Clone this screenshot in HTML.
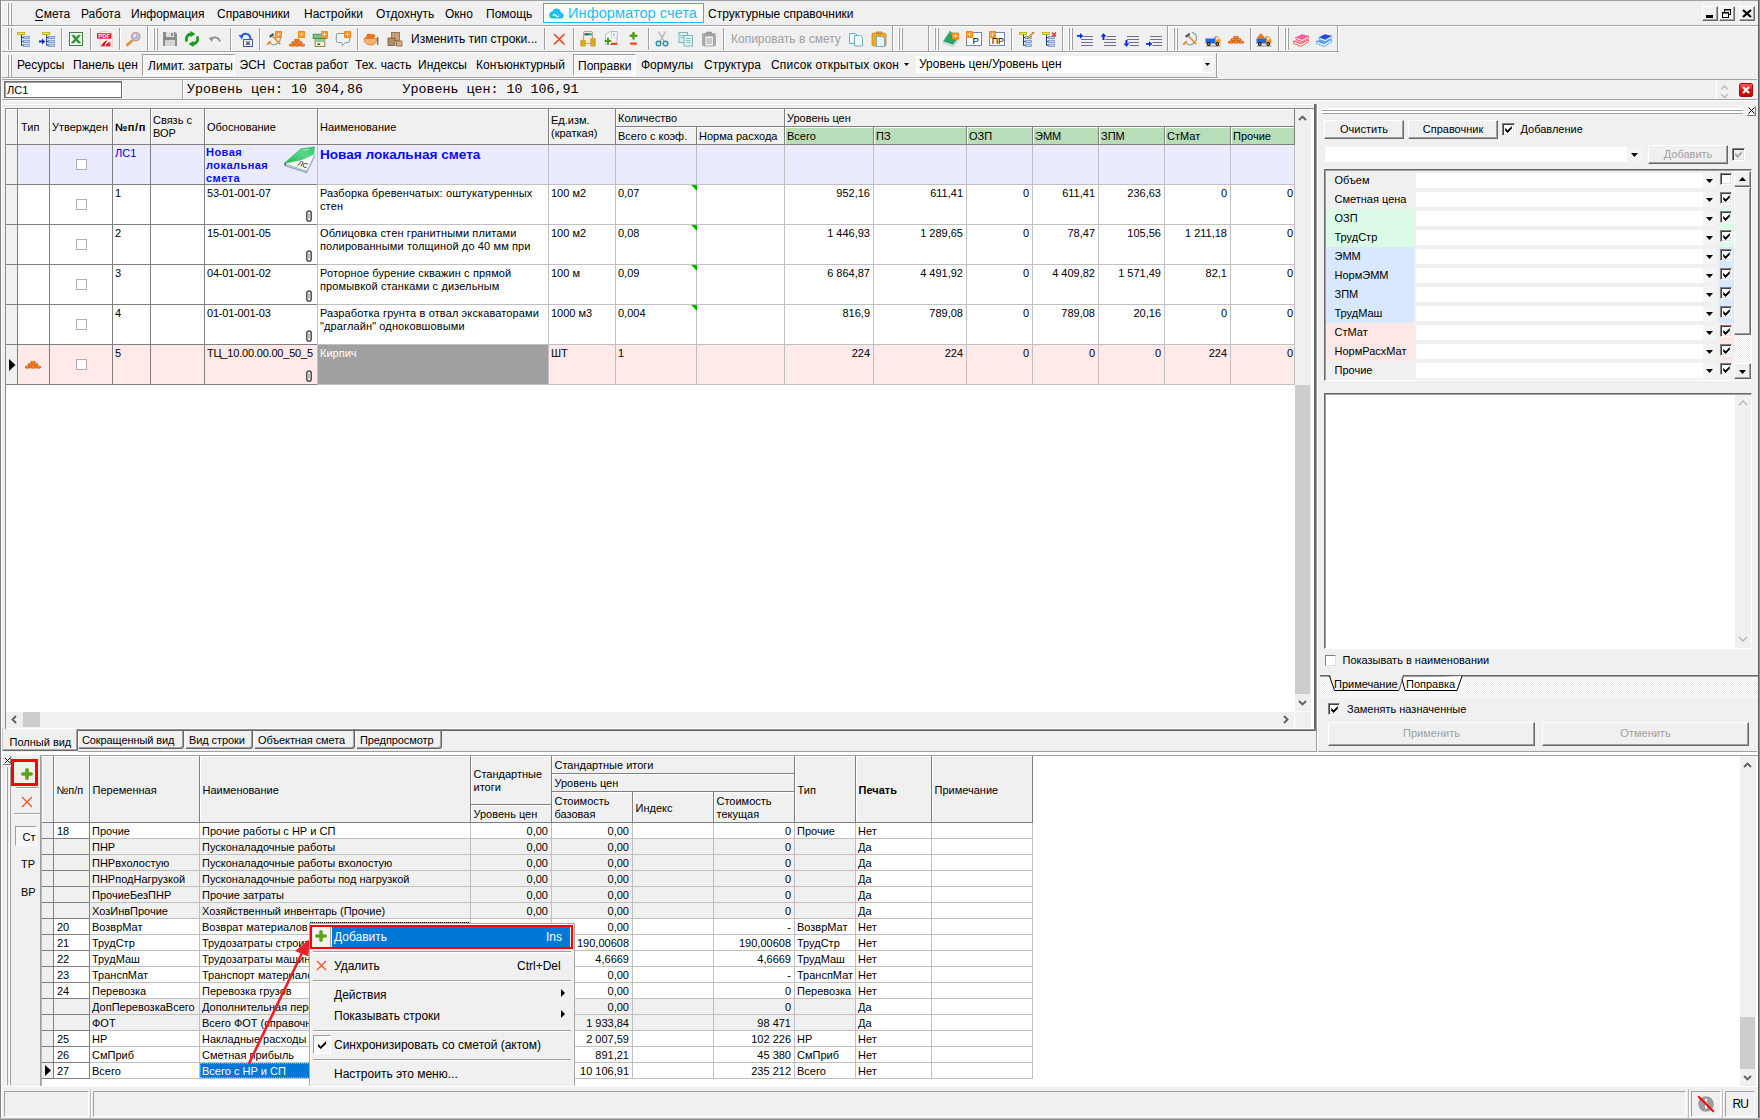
<!DOCTYPE html><html lang="ru"><head><meta charset="utf-8"><title>Смета</title><style>
html,body{margin:0;padding:0}
body{width:1760px;height:1120px;overflow:hidden;background:#f0f0f0;position:relative;
 font-family:"Liberation Sans",sans-serif;font-size:11px;color:#000}
div,span,svg{position:absolute;box-sizing:border-box}
span{white-space:pre;line-height:1}
.t{font-size:11px}
.m{font-size:12px}
.mono{font-family:"Liberation Mono",monospace;font-size:13.33px}
.r{text-align:right}
.btn{background:#f0f0f0;border:1px solid;border-color:#fff #696969 #696969 #fff;box-shadow:inset -1px -1px 0 #a0a0a0}
.sunk{border:1px solid;border-color:#a0a0a0 #fff #fff #a0a0a0}
</style></head><body>
<div style="left:0px;top:0px;width:1760px;height:1px;background:#a0a0a0"></div>
<div style="left:0px;top:0px;width:1px;height:1120px;background:#828282"></div>
<div style="left:1px;top:1px;width:1px;height:1118px;background:#fff"></div>
<div style="left:1759px;top:0px;width:1px;height:1120px;background:#8c9098"></div>
<div style="left:1758px;top:0px;width:1px;height:1120px;background:#5a6068"></div>
<div style="left:0px;top:1119px;width:1760px;height:1px;background:#8c8c8c"></div>
<div style="left:0px;top:1118px;width:1760px;height:1px;background:#c0c0c0"></div>
<div style="left:2px;top:25px;width:1756px;height:1px;background:#a0a0a0"></div>
<div style="left:2px;top:26px;width:1756px;height:1px;background:#ffffff"></div>
<div style="left:2px;top:51px;width:1337px;height:1px;background:#a0a0a0"></div>
<div style="left:2px;top:52px;width:1337px;height:1px;background:#ffffff"></div>
<div style="left:2px;top:77px;width:1216px;height:1px;background:#a0a0a0"></div>
<div style="left:2px;top:78px;width:1216px;height:1px;background:#ffffff"></div>
<div style="left:7px;top:3px;width:1px;height:22px;background:#ffffff"></div>
<div style="left:8px;top:3px;width:1px;height:22px;background:#a0a0a0"></div>
<div style="left:10px;top:3px;width:1px;height:22px;background:#ffffff"></div>
<div style="left:11px;top:3px;width:1px;height:22px;background:#a0a0a0"></div>
<span class="m" style="left:35px;top:8px;">Смета</span>
<span class="m" style="left:81px;top:8px;">Работа</span>
<span class="m" style="left:131px;top:8px;">Информация</span>
<span class="m" style="left:217px;top:8px;">Справочники</span>
<span class="m" style="left:304px;top:8px;">Настройки</span>
<span class="m" style="left:376px;top:8px;">Отдохнуть</span>
<span class="m" style="left:445px;top:8px;">Окно</span>
<span class="m" style="left:486px;top:8px;">Помощь</span>
<div style="left:35px;top:20px;width:8px;height:1px;background:#000"></div>
<div style="left:543px;top:3px;width:161px;height:20px;border:1px solid #1fbef2;background:#fbfdff"></div>
<svg style="left:548px;top:7px" width="16" height="12" viewBox="0 0 16 12"><path d="M4 11.5h8.5a3 3 0 0 0 .4-6A4.4 4.4 0 0 0 4.3 4.6 3.5 3.5 0 0 0 4 11.5z" fill="#1fbef2"/><path d="M5 8.6c.8-1.3 2-1.3 2.9 0 .9 1.300 2 1.300 2.900 0" fill="none" stroke="#fff" stroke-width="1.2"/></svg>
<span class="m" style="left:568px;top:6px;font-size:14.67px;color:#1fbef2">Информатор счета</span>
<span class="m" style="left:708px;top:8px;">Структурные справочники</span>
<div class="btn" style="left:1702px;top:6px;width:16px;height:15px;"></div>

<div style="left:1706px;top:15px;width:7px;height:3px;background:#000"></div>
<div class="btn" style="left:1719px;top:6px;width:16px;height:15px;"></div>

<svg style="left:1721px;top:8px" width="12" height="11" viewBox="0 0 12 11"><rect x="3.5" y="1.500" width="6" height="5" fill="none" stroke="#000"/><rect x="3" y="1" width="7" height="1.500" fill="#000"/><rect x="1.500" y="4.500" width="6" height="5" fill="#f0f0f0" stroke="#000"/><rect x="1" y="4" width="7" height="1.500" fill="#000"/></svg>
<div class="btn" style="left:1739px;top:6px;width:16px;height:15px;"></div>

<svg style="left:1742px;top:9px" width="10" height="9" viewBox="0 0 10 9"><path d="M1 1l8 7M9 1L1 8" stroke="#000" stroke-width="2.300"/></svg>
<div style="left:7px;top:28px;width:1px;height:22px;background:#ffffff"></div>
<div style="left:8px;top:28px;width:1px;height:22px;background:#a0a0a0"></div>
<div style="left:10px;top:28px;width:1px;height:22px;background:#ffffff"></div>
<div style="left:11px;top:28px;width:1px;height:22px;background:#a0a0a0"></div>
<svg style="left:16px;top:31px" width="16" height="16" viewBox="0 0 16 16"><rect x="1.300" y="1.400" width="7.400" height="2.200" fill="#f0e428" stroke="#a8a000" stroke-width=".6"/><path d="M5.500 3.800V14.500M5.500 6.500h2M5.500 10.400h2M5.500 14.300h2" stroke="#283870" stroke-width="1" fill="none"/><rect x="7.400" y="5.300" width="6.200" height="2.300" fill="#b4d0f4" stroke="#6888c0" stroke-width=".7"/><rect x="7.400" y="9.200" width="6.200" height="2.300" fill="#b4d0f4" stroke="#6888c0" stroke-width=".7"/><rect x="7.400" y="13.100" width="6.200" height="2.300" fill="#b4d0f4" stroke="#6888c0" stroke-width=".7"/></svg>
<svg style="left:39px;top:31px" width="16" height="16" viewBox="0 0 16 16"><g transform="translate(2.200,0)"><rect x="1.300" y="1.400" width="7.400" height="2.200" fill="#f0e428" stroke="#a8a000" stroke-width=".6"/><path d="M5.500 3.800V14.500M5.500 6.500h2M5.500 10.400h2M5.500 14.300h2" stroke="#283870" stroke-width="1" fill="none"/><rect x="7.400" y="5.300" width="6.200" height="2.300" fill="#b4d0f4" stroke="#6888c0" stroke-width=".7"/><rect x="7.400" y="9.200" width="6.200" height="2.300" fill="#b4d0f4" stroke="#6888c0" stroke-width=".7"/><rect x="7.400" y="13.100" width="6.200" height="2.300" fill="#b4d0f4" stroke="#6888c0" stroke-width=".7"/></g><path d="M0 9.500h3V7.600l3.200 2.900L3 13.400v-1.900H0z" fill="#0828e0"/></svg>
<div style="left:61px;top:28px;width:1px;height:22px;background:#a0a0a0"></div>
<div style="left:62px;top:28px;width:1px;height:22px;background:#ffffff"></div>
<svg style="left:68px;top:31px" width="16" height="16" viewBox="0 0 16 16"><rect x="1.500" y="1.500" width="13" height="13" fill="#eef4e8" stroke="#3c7c3c" stroke-width="1"/><rect x="2.500" y="2.500" width="11" height="11" fill="none" stroke="#fff" stroke-width=".8"/><path d="M3.600 4.200h2.800l1.700 2.200 1.900-2.200h2.600L9.300 7.900l3.500 4h-2.700L8 9.500l-2.200 2.400H3.200l3.500-4z" fill="#2c9a3c" stroke="#1c6c28" stroke-width=".4"/></svg>
<div style="left:90px;top:28px;width:1px;height:22px;background:#a0a0a0"></div>
<div style="left:91px;top:28px;width:1px;height:22px;background:#ffffff"></div>
<svg style="left:97px;top:31px" width="16" height="16" viewBox="0 0 16 16"><path d="M3.500 .5h9l3 3v12h-12z" fill="#f8f8f8" stroke="#c8c8c8" stroke-width=".6"/><rect x="0" y="2.200" width="14.400" height="5.500" fill="#e8141c"/><text x="7.200" y="6.900" font-size="5.600" font-weight="bold" font-family="Liberation Sans,sans-serif" text-anchor="middle" fill="#fff" letter-spacing=".3">PDF</text><path d="M4 15.200c1.500-3.500 3.500-5.500 7-6-1.800 1.400-2.800 3.300-3.300 6zM8.500 15.200c1-2.800 2.600-4.400 5.800-5-1.600 1.300-2.400 3-2.800 5z" fill="#e01020"/><path d="M11 15.200c.8-1.800 1.800-2.800 3.600-3.300-.9 1-1.300 2-1.500 3.300z" fill="#e01020"/></svg>
<div style="left:119px;top:28px;width:1px;height:22px;background:#a0a0a0"></div>
<div style="left:120px;top:28px;width:1px;height:22px;background:#ffffff"></div>
<svg style="left:125px;top:31px" width="16" height="16" viewBox="0 0 16 16"><path d="M2.200 14l4.600-4" stroke="#e07820" stroke-width="2.400" stroke-linecap="round"/><path d="M2.200 14l4.600-4" stroke="#f8b070" stroke-width=".8" stroke-linecap="round"/><circle cx="10.700" cy="5.700" r="4.200" fill="#b8ccf4" stroke="#d8906c" stroke-width="1.200"/><circle cx="10.700" cy="5.700" r="2.600" fill="#a4bcf0"/><circle cx="9.600" cy="4.500" r="1.500" fill="#e4ecfc"/></svg>
<div style="left:147px;top:26px;width:1px;height:25px;background:#a0a0a0"></div>
<div style="left:148px;top:27px;width:1px;height:24px;background:#fff"></div>
<div style="left:153px;top:28px;width:1px;height:22px;background:#ffffff"></div>
<div style="left:154px;top:28px;width:1px;height:22px;background:#a0a0a0"></div>
<div style="left:156px;top:28px;width:1px;height:22px;background:#ffffff"></div>
<div style="left:157px;top:28px;width:1px;height:22px;background:#a0a0a0"></div>
<svg style="left:162px;top:31px" width="16" height="16" viewBox="0 0 16 16"><path d="M1 1h12l2 2v12H1z" fill="#8c8c8c"/><rect x="4" y="1" width="8" height="5" fill="#e0e0e0"/><rect x="9" y="2" width="2" height="3" fill="#8c8c8c"/><rect x="3" y="9" width="10" height="6" fill="#d4d4d4"/></svg>
<svg style="left:184px;top:31px" width="16" height="16" viewBox="0 0 16 16"><path d="M3 10.500A5 5 0 0 1 7.500 3" fill="none" stroke="#1c9c1c" stroke-width="2.800"/><path d="M6.500 0l5 3-5 3.200z" fill="#1c9c1c"/><path d="M13 5.500A5 5 0 0 1 8.500 13" fill="none" stroke="#1c9c1c" stroke-width="2.800"/><path d="M9.500 16l-5-3 5-3.200z" fill="#1c9c1c"/></svg>
<svg style="left:207px;top:31px" width="16" height="16" viewBox="0 0 16 16"><path d="M4 9c1.500-3.500 7-4 9 1.500" fill="none" stroke="#8c8c8c" stroke-width="1.800"/><path d="M1.500 6.500l4.500 0-1 4.500z" fill="#8c8c8c"/></svg>
<div style="left:230px;top:28px;width:1px;height:22px;background:#a0a0a0"></div>
<div style="left:231px;top:28px;width:1px;height:22px;background:#ffffff"></div>
<svg style="left:238px;top:31px" width="16" height="16" viewBox="0 0 16 16"><path d="M3.500 6C5 1.500 12 1.500 12.500 8" fill="none" stroke="#2858e0" stroke-width="2"/><path d="M0.500 4l5 0-1.500 4.500z" fill="#2858e0"/><rect x="5.500" y="8.500" width="9" height="7" fill="#e8ecf8" stroke="#4858a8"/><text x="10" y="14.300" font-size="6.500" font-family="Liberation Sans,sans-serif" text-anchor="middle" fill="#000">ж</text></svg>
<div style="left:259px;top:28px;width:1px;height:22px;background:#a0a0a0"></div>
<div style="left:260px;top:28px;width:1px;height:22px;background:#ffffff"></div>
<svg style="left:266px;top:31px" width="16" height="16" viewBox="0 0 16 16"><path d="M10 1.300C16 3 16.500 11 8.500 13.800 6.500 14.200 5.200 13.100 4.600 12.100" fill="none" stroke="#88a4a4" stroke-width="1.200"/><path d="M4.800 10.200L1.300 13.600" stroke="#e08820" stroke-width="1.900"/><path d="M6.300 4.900l7.800 8.200" stroke="#e89028" stroke-width="1.600"/><path d="M3 5.100l4-3 1.300 1.700-4 3z" fill="#3c5c64"/><rect x="9" y="0" width="7" height="7" rx=".9" fill="#f4860c"/><circle cx="12.500" cy="3.500" r="1.150" fill="#fff"/><circle cx="14.90" cy="3.50" r=".45" fill="#fff"/><circle cx="14.20" cy="5.20" r=".45" fill="#fff"/><circle cx="12.50" cy="5.90" r=".45" fill="#fff"/><circle cx="10.80" cy="5.20" r=".45" fill="#fff"/><circle cx="10.10" cy="3.50" r=".45" fill="#fff"/><circle cx="10.80" cy="1.80" r=".45" fill="#fff"/><circle cx="12.50" cy="1.10" r=".45" fill="#fff"/><circle cx="14.20" cy="1.80" r=".45" fill="#fff"/></svg>
<svg style="left:289px;top:31px" width="16" height="16" viewBox="0 0 16 16"><g transform="translate(0,2.900)"><g fill="#f07010" stroke="#c04c00" stroke-width=".5"><rect x="5.5" y="5.2" width="5" height="2.300" rx="1.100"/><rect x="2.8" y="7.6" width="5" height="2.300" rx="1.100"/><rect x="8.2" y="7.6" width="5" height="2.300" rx="1.100"/><rect x="0.2" y="10" width="5" height="2.300" rx="1.100"/><rect x="5.5" y="10" width="5" height="2.300" rx="1.100"/><rect x="10.8" y="10" width="5" height="2.300" rx="1.100"/></g><path d="M6.7 6.0h2.600" stroke="#ffb060" stroke-width=".6"/><path d="M4.0 8.4h2.600" stroke="#ffb060" stroke-width=".6"/><path d="M9.399999999999999 8.4h2.600" stroke="#ffb060" stroke-width=".6"/><path d="M1.4 10.8h2.600" stroke="#ffb060" stroke-width=".6"/><path d="M6.7 10.8h2.600" stroke="#ffb060" stroke-width=".6"/><path d="M12.0 10.8h2.600" stroke="#ffb060" stroke-width=".6"/></g><rect x="9" y="0" width="7" height="7" rx=".9" fill="#f4860c"/><circle cx="12.500" cy="3.500" r="1.150" fill="#fff"/><circle cx="14.90" cy="3.50" r=".45" fill="#fff"/><circle cx="14.20" cy="5.20" r=".45" fill="#fff"/><circle cx="12.50" cy="5.90" r=".45" fill="#fff"/><circle cx="10.80" cy="5.20" r=".45" fill="#fff"/><circle cx="10.10" cy="3.50" r=".45" fill="#fff"/><circle cx="10.80" cy="1.80" r=".45" fill="#fff"/><circle cx="12.50" cy="1.10" r=".45" fill="#fff"/><circle cx="14.20" cy="1.80" r=".45" fill="#fff"/></svg>
<svg style="left:312px;top:31px" width="16" height="16" viewBox="0 0 16 16"><rect x="3.100" y="7.500" width="9.700" height="8" fill="#fcf8d8" stroke="#806428" stroke-width=".8"/><rect x="3.500" y="7.500" width="8.900" height="3.700" fill="#8cc898"/><rect x="1.100" y="3.200" width="13.700" height="4.300" fill="#7cc088" stroke="#3c8048" stroke-width=".8"/><rect x="5.200" y="12.600" width="3.200" height="1.300" rx=".6" fill="#205c28"/><rect x="9" y="0" width="7" height="7" rx=".9" fill="#f4860c"/><circle cx="12.500" cy="3.500" r="1.150" fill="#fff"/><circle cx="14.90" cy="3.50" r=".45" fill="#fff"/><circle cx="14.20" cy="5.20" r=".45" fill="#fff"/><circle cx="12.50" cy="5.90" r=".45" fill="#fff"/><circle cx="10.80" cy="5.20" r=".45" fill="#fff"/><circle cx="10.10" cy="3.50" r=".45" fill="#fff"/><circle cx="10.80" cy="1.80" r=".45" fill="#fff"/><circle cx="12.50" cy="1.10" r=".45" fill="#fff"/><circle cx="14.20" cy="1.80" r=".45" fill="#fff"/></svg>
<svg style="left:335px;top:31px" width="16" height="16" viewBox="0 0 16 16"><path d="M2.800 2.500h10.300a1.500 1.500 0 0 1 1.500 1.500v6a1.500 1.500 0 0 1-1.500 1.500H10.500L7.300 14.600 6.800 11.500H2.800A1.500 1.500 0 0 1 1.300 10V4a1.500 1.500 0 0 1 1.500-1.500z" fill="#e4f8fc" stroke="#808c94" stroke-width=".9"/><rect x="9" y="0" width="7" height="7" rx=".9" fill="#f4860c"/><circle cx="12.500" cy="3.500" r="1.150" fill="#fff"/><circle cx="14.90" cy="3.50" r=".45" fill="#fff"/><circle cx="14.20" cy="5.20" r=".45" fill="#fff"/><circle cx="12.50" cy="5.90" r=".45" fill="#fff"/><circle cx="10.80" cy="5.20" r=".45" fill="#fff"/><circle cx="10.10" cy="3.50" r=".45" fill="#fff"/><circle cx="10.80" cy="1.80" r=".45" fill="#fff"/><circle cx="12.50" cy="1.10" r=".45" fill="#fff"/><circle cx="14.20" cy="1.80" r=".45" fill="#fff"/></svg>
<div style="left:357px;top:28px;width:1px;height:22px;background:#a0a0a0"></div>
<div style="left:358px;top:28px;width:1px;height:22px;background:#ffffff"></div>
<svg style="left:363px;top:31px" width="16" height="16" viewBox="0 0 16 16"><g fill="#f07818" stroke="#c85000" stroke-width=".4"><rect x="4" y="3" width="4" height="2.400" rx=".8"/><rect x="8" y="3.600" width="4" height="2.400" rx=".8"/><rect x="2.500" y="5.500" width="4" height="2.400" rx=".8"/><rect x="6.500" y="5.800" width="4" height="2.400" rx=".8"/></g><path d="M1 7.500h13c0 4-2.500 6.500-6.500 6.500S1 11.500 1 7.500z" fill="#f8b070" stroke="#d86820" stroke-width=".7"/><path d="M14.800 6v8" stroke="#404040" stroke-width="1"/></svg>
<svg style="left:387px;top:31px" width="16" height="16" viewBox="0 0 16 16"><rect x="4.500" y="1.500" width="8" height="8" fill="#c8a078" stroke="#8c6440" stroke-width=".8"/><rect x="1" y="7" width="7" height="7.500" fill="#b48c64" stroke="#7c5838" stroke-width=".8"/><rect x="9.500" y="10" width="5.500" height="5" fill="#d4ac84" stroke="#8c6440" stroke-width=".8"/></svg>
<span class="m" style="left:411px;top:33px;">Изменить тип строки...</span>
<div style="left:544px;top:28px;width:1px;height:22px;background:#a0a0a0"></div>
<div style="left:545px;top:28px;width:1px;height:22px;background:#ffffff"></div>
<svg style="left:551px;top:31px" width="16" height="16" viewBox="0 0 16 16"><path d="M3 3l10.500 10.500M13.500 3L3 13.500" stroke="#f04020" stroke-width="1.600"/></svg>
<div style="left:573px;top:28px;width:1px;height:22px;background:#a0a0a0"></div>
<div style="left:574px;top:28px;width:1px;height:22px;background:#ffffff"></div>
<svg style="left:580px;top:31px" width="16" height="16" viewBox="0 0 16 16"><rect x="3.500" y=".5" width="9" height="12" rx="1" fill="#f4e8d0" stroke="#b08070" stroke-width=".7"/><rect x="4.300" y="2.200" width="7.400" height="2.200" fill="#207868"/><rect x="9" y="2.600" width="2.300" height="1.300" fill="#30d0d8"/><g fill="#fffbe8"><rect x="5" y="5.500" width="1.500" height="1.300"/><rect x="7.200" y="5.500" width="1.500" height="1.300"/><rect x="9.400" y="5.500" width="1.500" height="1.300"/><rect x="5" y="7.600" width="1.500" height="1.300"/><rect x="7.200" y="7.600" width="1.500" height="1.300"/><rect x="9.400" y="7.600" width="1.500" height="1.300"/></g><g fill="#f0c020" stroke="#a07808" stroke-width=".5"><rect x=".5" y="9.300" width="5" height="2" rx="1"/><rect x=".5" y="11.300" width="5" height="2" rx="1"/><rect x=".5" y="13.300" width="5" height="2" rx="1"/><rect x="10.500" y="7.300" width="5" height="2" rx="1"/><rect x="10.500" y="9.300" width="5" height="2" rx="1"/><rect x="10.500" y="11.300" width="5" height="2" rx="1"/><rect x="10.500" y="13.300" width="5" height="2" rx="1"/></g></svg>
<svg style="left:603px;top:31px" width="16" height="16" viewBox="0 0 16 16"><path d="M5 1.500L8 .5h6v13H2.500V4z" fill="#f6f8fa" stroke="#a8acb0" stroke-width=".8"/><rect x="8.500" y=".8" width="5.500" height="6" fill="#fff" stroke="#b4b8bc" stroke-width=".6"/><path d="M10 2.800h2M10 4.300h2" stroke="#7090f0" stroke-width=".7"/><path d="M5 7.500v5M2.500 10h5" stroke="#4c9c14" stroke-width="2" stroke-linecap="round"/><path d="M8.800 12.700h4.400" stroke="#f03820" stroke-width="2" stroke-linecap="round"/></svg>
<svg style="left:625px;top:31px" width="16" height="16" viewBox="0 0 16 16"><path d="M8.500 2v5.500M5.700 4.700h5.600" stroke="#5a9c14" stroke-width="2.500" stroke-linecap="round" fill="none"/><path d="M6 12.700h5" stroke="#f04820" stroke-width="2.300" stroke-linecap="round"/></svg>
<div style="left:648px;top:28px;width:1px;height:22px;background:#a0a0a0"></div>
<div style="left:649px;top:28px;width:1px;height:22px;background:#ffffff"></div>
<svg style="left:654px;top:31px" width="16" height="16" viewBox="0 0 16 16"><path d="M4.500 0.500l5.500 10M11.500 .5L6 10.500" stroke="#a8b4b8" stroke-width="1.300"/><circle cx="4.500" cy="12.500" r="2.300" fill="none" stroke="#2890a0" stroke-width="1.400"/><circle cx="11.500" cy="12.500" r="2.300" fill="none" stroke="#2890a0" stroke-width="1.400"/></svg>
<svg style="left:678px;top:31px" width="16" height="16" viewBox="0 0 16 16"><rect x="1" y="1.500" width="8.500" height="10" fill="#d4f0f0" stroke="#78b0b4" stroke-width=".9"/><rect x="6" y="4.500" width="8.500" height="10.500" fill="#dcf4f4" stroke="#78b0b4" stroke-width=".9"/><path d="M8 7.500h4.500M8 9.500h4.500M8 11.500h4.500" stroke="#78b0b4" stroke-width=".8"/><path d="M2.500 4.500h3M2.500 6.500h3" stroke="#78b0b4" stroke-width=".8"/></svg>
<svg style="left:701px;top:31px" width="16" height="16" viewBox="0 0 16 16"><rect x="1" y="2" width="14" height="13" rx="1.500" fill="#acacac"/><rect x="5" y=".7" width="6" height="2.600" rx="1" fill="#989898"/><rect x="3.800" y="5" width="8.700" height="10" fill="#f2f2f2" stroke="#888" stroke-width=".7"/><path d="M5.300 8h5.700M5.300 10h5.700M5.300 12h5.700" stroke="#8c8c8c" stroke-width=".8"/></svg>
<div style="left:723px;top:28px;width:1px;height:22px;background:#a0a0a0"></div>
<div style="left:724px;top:28px;width:1px;height:22px;background:#ffffff"></div>
<span class="m" style="left:731px;top:33px;color:#a0a0a0">Копировать в смету</span>
<svg style="left:848px;top:31px" width="16" height="16" viewBox="0 0 16 16"><path d="M1.500 2.500h6l2 2v8h-8z" fill="#eef8f8" stroke="#68a4ac" stroke-width=".9"/><path d="M6.500 4.500h6l2 2v8.500h-8z" fill="#eef8f8" stroke="#68a4ac" stroke-width=".9"/></svg>
<svg style="left:871px;top:31px" width="16" height="16" viewBox="0 0 16 16"><rect x="1" y="2" width="14" height="13" rx="1.500" fill="#f0a828" stroke="#c07c10" stroke-width=".7"/><rect x="5" y="0.500" width="6" height="3" fill="#d09020"/><path d="M5.500 5.500h6l2 2v8h-8z" fill="#e8f4f8" stroke="#68a4ac" stroke-width=".8"/></svg>
<div style="left:892px;top:26px;width:1px;height:25px;background:#a0a0a0"></div>
<div style="left:893px;top:27px;width:1px;height:24px;background:#fff"></div>
<div style="left:898px;top:28px;width:1px;height:22px;background:#ffffff"></div>
<div style="left:899px;top:28px;width:1px;height:22px;background:#a0a0a0"></div>
<div style="left:901px;top:28px;width:1px;height:22px;background:#ffffff"></div>
<div style="left:902px;top:28px;width:1px;height:22px;background:#a0a0a0"></div>
<div style="left:928px;top:26px;width:1px;height:25px;background:#a0a0a0"></div>
<div style="left:929px;top:27px;width:1px;height:24px;background:#fff"></div>
<div style="left:934px;top:28px;width:1px;height:22px;background:#ffffff"></div>
<div style="left:935px;top:28px;width:1px;height:22px;background:#a0a0a0"></div>
<div style="left:937px;top:28px;width:1px;height:22px;background:#ffffff"></div>
<div style="left:938px;top:28px;width:1px;height:22px;background:#a0a0a0"></div>
<svg style="left:943px;top:31px" width="16" height="16" viewBox="0 0 16 16"><path d="M.2 10.300L10 13.600l5.800-7.100v2L10.500 15.600.5 12.300z" fill="#e8eeee" stroke="#a0acac" stroke-width=".5"/><path d="M.2 10.300L7 0l8.800 6.500L10 13.600z" fill="#2ca464"/><path d="M7 0l8.800 6.500-1.500 1.800L6 2z" fill="#48bc80"/><g transform="translate(0,1.500)"><rect x="9" y="0" width="7" height="7" rx=".9" fill="#f4860c"/><circle cx="12.500" cy="3.500" r="1.150" fill="#fff"/><circle cx="14.90" cy="3.50" r=".45" fill="#fff"/><circle cx="14.20" cy="5.20" r=".45" fill="#fff"/><circle cx="12.50" cy="5.90" r=".45" fill="#fff"/><circle cx="10.80" cy="5.20" r=".45" fill="#fff"/><circle cx="10.10" cy="3.50" r=".45" fill="#fff"/><circle cx="10.80" cy="1.80" r=".45" fill="#fff"/><circle cx="12.50" cy="1.10" r=".45" fill="#fff"/><circle cx="14.20" cy="1.80" r=".45" fill="#fff"/></g></svg>
<svg style="left:966px;top:31px" width="16" height="16" viewBox="0 0 16 16"><rect x=".5" y="1.500" width="15" height="13" fill="#fff" stroke="#6878a8" stroke-width=".9"/><g transform="translate(-9,0)"><rect x="9" y="0" width="7" height="7" rx=".9" fill="#f4860c"/><circle cx="12.500" cy="3.500" r="1.150" fill="#fff"/><circle cx="14.90" cy="3.50" r=".45" fill="#fff"/><circle cx="14.20" cy="5.20" r=".45" fill="#fff"/><circle cx="12.50" cy="5.90" r=".45" fill="#fff"/><circle cx="10.80" cy="5.20" r=".45" fill="#fff"/><circle cx="10.10" cy="3.50" r=".45" fill="#fff"/><circle cx="10.80" cy="1.80" r=".45" fill="#fff"/><circle cx="12.50" cy="1.10" r=".45" fill="#fff"/><circle cx="14.20" cy="1.80" r=".45" fill="#fff"/></g><text x="9.700" y="12.800" font-size="9.500" font-family="Liberation Sans,sans-serif" text-anchor="middle" fill="#000">Р</text></svg>
<svg style="left:989px;top:31px" width="16" height="16" viewBox="0 0 16 16"><rect x=".5" y="1.500" width="15" height="13" fill="#fff" stroke="#6878a8" stroke-width=".9"/><g transform="translate(-9,0)"><rect x="9" y="0" width="7" height="7" rx=".9" fill="#f4860c"/><circle cx="12.500" cy="3.500" r="1.150" fill="#fff"/><circle cx="14.90" cy="3.50" r=".45" fill="#fff"/><circle cx="14.20" cy="5.20" r=".45" fill="#fff"/><circle cx="12.50" cy="5.90" r=".45" fill="#fff"/><circle cx="10.80" cy="5.20" r=".45" fill="#fff"/><circle cx="10.10" cy="3.50" r=".45" fill="#fff"/><circle cx="10.80" cy="1.80" r=".45" fill="#fff"/><circle cx="12.50" cy="1.10" r=".45" fill="#fff"/><circle cx="14.20" cy="1.80" r=".45" fill="#fff"/></g><text x="8.700" y="12.800" font-size="9" font-family="Liberation Sans,sans-serif" text-anchor="middle" fill="#000" letter-spacing="-.3">ПР</text></svg>
<div style="left:1011px;top:28px;width:1px;height:22px;background:#a0a0a0"></div>
<div style="left:1012px;top:28px;width:1px;height:22px;background:#ffffff"></div>
<svg style="left:1018px;top:31px" width="16" height="16" viewBox="0 0 16 16"><rect x="1.300" y="1.400" width="7.400" height="2.200" fill="#f0e428" stroke="#a8a000" stroke-width=".6"/><path d="M5.500 3.800V14.500M5.500 6.500h2M5.500 10.400h2M5.500 14.300h2" stroke="#283870" stroke-width="1" fill="none"/><rect x="7.400" y="5.300" width="6.200" height="2.300" fill="#b4d0f4" stroke="#6888c0" stroke-width=".7"/><rect x="7.400" y="9.200" width="6.200" height="2.300" fill="#b4d0f4" stroke="#6888c0" stroke-width=".7"/><rect x="7.400" y="13.100" width="6.200" height="2.300" fill="#b4d0f4" stroke="#6888c0" stroke-width=".7"/><path d="M9 7l5.500-5.500 1 1L10 8z" fill="#f0b040" stroke="#a06010" stroke-width=".4"/><path d="M14 1l1.500 1.500.5-1.500z" fill="#e02020"/></svg>
<svg style="left:1041px;top:31px" width="16" height="16" viewBox="0 0 16 16"><rect x="1.300" y="1.400" width="7.400" height="2.200" fill="#f0e428" stroke="#a8a000" stroke-width=".6"/><path d="M5.500 3.800V14.500M5.500 6.500h2M5.500 10.400h2M5.500 14.300h2" stroke="#283870" stroke-width="1" fill="none"/><rect x="7.400" y="5.300" width="6.200" height="2.300" fill="#b4d0f4" stroke="#6888c0" stroke-width=".7"/><rect x="7.400" y="9.200" width="6.200" height="2.300" fill="#b4d0f4" stroke="#6888c0" stroke-width=".7"/><rect x="7.400" y="13.100" width="6.200" height="2.300" fill="#b4d0f4" stroke="#6888c0" stroke-width=".7"/><path d="M11 1.500l4 4M15 1.500l-4 4" stroke="#e82020" stroke-width="1.200"/></svg>
<div style="left:1062px;top:26px;width:1px;height:25px;background:#a0a0a0"></div>
<div style="left:1063px;top:27px;width:1px;height:24px;background:#fff"></div>
<div style="left:1068px;top:28px;width:1px;height:22px;background:#ffffff"></div>
<div style="left:1069px;top:28px;width:1px;height:22px;background:#a0a0a0"></div>
<div style="left:1071px;top:28px;width:1px;height:22px;background:#ffffff"></div>
<div style="left:1072px;top:28px;width:1px;height:22px;background:#a0a0a0"></div>
<svg style="left:1077px;top:31px" width="16" height="16" viewBox="0 0 16 16"><path d="M6.500 5.500h9.500" stroke="#6c7088"/><path d="M4 8.500h12M4 11.500h12M4 14.500h12" stroke="#6c7088" stroke-width="1"/><path d="M0 4h3V2l3.300 2.900L3 7.800v-2H0z" fill="#0030d8"/></svg>
<svg style="left:1100px;top:31px" width="16" height="16" viewBox="0 0 16 16"><path d="M7 5.500h9" stroke="#6c7088"/><path d="M5.500 8.500H16M4 11.500h12M4 14.500h12" stroke="#6c7088"/><path d="M2.500 9V5.500H.5l3-3.300 3 3.300h-2V9z" fill="#0030d8"/></svg>
<svg style="left:1123px;top:31px" width="16" height="16" viewBox="0 0 16 16"><path d="M4 5.500h12M4 8.500h12M5.500 11.500H16M7 14.500h9" stroke="#6c7088"/><path d="M2.500 9v3.500H.5l3 3.300 3-3.300h-2V9z" fill="#0030d8"/></svg>
<svg style="left:1146px;top:31px" width="16" height="16" viewBox="0 0 16 16"><path d="M4 5.500h12M4 8.500h12M6.500 11.500H16M6.500 14.500H16" stroke="#6c7088"/><path d="M0 12h3v-2l3.300 2.900L3 15.800v-2H0z" fill="#0030d8"/></svg>
<div style="left:1167px;top:26px;width:1px;height:25px;background:#a0a0a0"></div>
<div style="left:1168px;top:27px;width:1px;height:24px;background:#fff"></div>
<div style="left:1173px;top:28px;width:1px;height:22px;background:#ffffff"></div>
<div style="left:1174px;top:28px;width:1px;height:22px;background:#a0a0a0"></div>
<div style="left:1176px;top:28px;width:1px;height:22px;background:#ffffff"></div>
<div style="left:1177px;top:28px;width:1px;height:22px;background:#a0a0a0"></div>
<svg style="left:1182px;top:31px" width="16" height="16" viewBox="0 0 16 16"><path d="M10 1.300C16 3 16.500 11 8.500 13.800 6.500 14.200 5.200 13.100 4.600 12.100" fill="none" stroke="#88a4a4" stroke-width="1.200"/><path d="M4.800 10.200L1.300 13.600" stroke="#e08820" stroke-width="1.900"/><path d="M6.300 4.900l7.800 8.200" stroke="#e89028" stroke-width="1.600"/><path d="M3 5.100l4-3 1.300 1.700-4 3z" fill="#3c5c64"/></svg>
<svg style="left:1205px;top:31px" width="16" height="16" viewBox="0 0 16 16"><path d="M.5 7.500h8.500l1-2h2v7H.5z" fill="#2068d8"/><path d="M10 5.500h3l2.500 3v4H10z" fill="#f09820"/><path d="M11 6.500h1.800l1.500 2H11z" fill="#e8f4ff"/><path d="M1 15h14.500" stroke="#707070" stroke-width=".8"/><circle cx="3.800" cy="13" r="1.900" fill="#181818"/><circle cx="12.300" cy="13" r="1.900" fill="#181818"/><circle cx="3.800" cy="13" r=".8" fill="#f0e040"/><circle cx="12.300" cy="13" r=".8" fill="#f0e040"/></svg>
<svg style="left:1228px;top:31px" width="16" height="16" viewBox="0 0 16 16"><g fill="#f07010" stroke="#c04c00" stroke-width=".5"><rect x="5.5" y="5.2" width="5" height="2.300" rx="1.100"/><rect x="2.8" y="7.6" width="5" height="2.300" rx="1.100"/><rect x="8.2" y="7.6" width="5" height="2.300" rx="1.100"/><rect x="0.2" y="10" width="5" height="2.300" rx="1.100"/><rect x="5.5" y="10" width="5" height="2.300" rx="1.100"/><rect x="10.8" y="10" width="5" height="2.300" rx="1.100"/></g><path d="M6.7 6.0h2.600" stroke="#ffb060" stroke-width=".6"/><path d="M4.0 8.4h2.600" stroke="#ffb060" stroke-width=".6"/><path d="M9.399999999999999 8.4h2.600" stroke="#ffb060" stroke-width=".6"/><path d="M1.4 10.8h2.600" stroke="#ffb060" stroke-width=".6"/><path d="M6.7 10.8h2.600" stroke="#ffb060" stroke-width=".6"/><path d="M12.0 10.8h2.600" stroke="#ffb060" stroke-width=".6"/></svg>
<div style="left:1250px;top:28px;width:1px;height:22px;background:#a0a0a0"></div>
<div style="left:1251px;top:28px;width:1px;height:22px;background:#ffffff"></div>
<svg style="left:1256px;top:31px" width="16" height="16" viewBox="0 0 16 16"><path d="M.5 7.500h8.500l1-2h2v7H.5z" fill="#2068d8"/><path d="M10 5.500h3l2.500 3v4H10z" fill="#f09820"/><path d="M11 6.500h1.800l1.500 2H11z" fill="#e8f4ff"/><path d="M1 15h14.500" stroke="#707070" stroke-width=".8"/><circle cx="3.800" cy="13" r="1.900" fill="#181818"/><circle cx="12.300" cy="13" r="1.900" fill="#181818"/><circle cx="3.800" cy="13" r=".8" fill="#f0e040"/><circle cx="12.300" cy="13" r=".8" fill="#f0e040"/><g fill="#f07818" stroke="#c85000" stroke-width=".4"><rect x="1.500" y="5.500" width="3.200" height="2.200" rx=".7"/><rect x="5" y="5.500" width="3.200" height="2.200" rx=".7"/><rect x="3.200" y="3.300" width="3.200" height="2.200" rx=".7"/></g></svg>
<div style="left:1278px;top:26px;width:1px;height:25px;background:#a0a0a0"></div>
<div style="left:1279px;top:27px;width:1px;height:24px;background:#fff"></div>
<div style="left:1284px;top:28px;width:1px;height:22px;background:#ffffff"></div>
<div style="left:1285px;top:28px;width:1px;height:22px;background:#a0a0a0"></div>
<div style="left:1287px;top:28px;width:1px;height:22px;background:#ffffff"></div>
<div style="left:1288px;top:28px;width:1px;height:22px;background:#a0a0a0"></div>
<svg style="left:1293px;top:31px" width="16" height="16" viewBox="0 0 16 16"><path d="M.6 10L7 7.200l8.600 1.400L8 13z" fill="#f060a8" opacity=".55"/><path d="M.6 10L8 13l7.600-4.400v2.200L8 15.400.6 12.400z" fill="#fff" stroke="#f04848" stroke-width=".9" stroke-linejoin="round"/><path d="M2.900 6.200l6.400 2.300 6.300-3.700v2L9.300 10.600 2.900 8.200z" fill="#fff" stroke="#f04848" stroke-width=".8" stroke-linejoin="round"/><path d="M2.900 6.200l5.900-2.900 6.800 1.500-6.300 3.700z" fill="#f060a8"/></svg>
<svg style="left:1316px;top:31px" width="16" height="16" viewBox="0 0 16 16"><path d="M.6 10L7 7.200l8.600 1.400L8 13z" fill="#2848d8" opacity=".55"/><path d="M.6 10L8 13l7.600-4.400v2.200L8 15.400.6 12.400z" fill="#fff" stroke="#38a4ec" stroke-width=".9" stroke-linejoin="round"/><path d="M2.900 6.200l6.400 2.300 6.300-3.700v2L9.300 10.600 2.900 8.200z" fill="#fff" stroke="#38a4ec" stroke-width=".8" stroke-linejoin="round"/><path d="M2.900 6.200l5.900-2.900 6.800 1.500-6.300 3.700z" fill="#2848d8"/></svg>
<div style="left:1337px;top:26px;width:1px;height:25px;background:#a0a0a0"></div>
<div style="left:1338px;top:27px;width:1px;height:24px;background:#fff"></div>
<div style="left:7px;top:55px;width:1px;height:22px;background:#ffffff"></div>
<div style="left:8px;top:55px;width:1px;height:22px;background:#a0a0a0"></div>
<div style="left:10px;top:55px;width:1px;height:22px;background:#ffffff"></div>
<div style="left:11px;top:55px;width:1px;height:22px;background:#a0a0a0"></div>
<div style="left:142px;top:54px;width:93px;height:22px;background:#f8f8f8;background-image:repeating-conic-gradient(#fff 0 25%,#f0f0f0 0 50%);background-size:2px 2px;border-left:1px solid #a0a0a0;border-top:1px solid #a0a0a0;border-right:1px solid #fff;border-bottom:1px solid #fff"></div>
<div style="left:573px;top:54px;width:63px;height:22px;background:#f8f8f8;background-image:repeating-conic-gradient(#fff 0 25%,#f0f0f0 0 50%);background-size:2px 2px;border-left:1px solid #a0a0a0;border-top:1px solid #a0a0a0;border-right:1px solid #fff;border-bottom:1px solid #fff"></div>
<span class="m" style="left:17px;top:59px;">Ресурсы</span>
<span class="m" style="left:73px;top:59px;">Панель цен</span>
<span class="m" style="left:148px;top:60px;">Лимит. затраты</span>
<span class="m" style="left:239.5px;top:59px;">ЭСН</span>
<span class="m" style="left:273px;top:59px;">Состав работ</span>
<span class="m" style="left:355px;top:59px;">Тех. часть</span>
<span class="m" style="left:418px;top:59px;">Индексы</span>
<span class="m" style="left:476px;top:59px;">Конъюнктурный</span>
<span class="m" style="left:578px;top:60px;">Поправки</span>
<span class="m" style="left:641px;top:59px;">Формулы</span>
<span class="m" style="left:704px;top:59px;">Структура</span>
<span class="m" style="left:771px;top:59px;letter-spacing:.18px">Список открытых окон</span>
<svg style="left:904px;top:63px" width="5" height="3" viewBox="0 0 5 3"><path d="M0 0h5L2.500 3z" fill="#000"/></svg>
<div style="left:916px;top:56px;width:297px;height:17px;background:#fff"></div>
<div style="left:1203px;top:57.5px;width:9px;height:14.5px;background:#f0f0f0"></div>
<svg style="left:1205px;top:63px" width="5" height="3" viewBox="0 0 5 3"><path d="M0 0h5L2.500 3z" fill="#000"/></svg>
<span class="m" style="left:919px;top:58px;">Уровень цен/Уровень цен</span>
<div style="left:1216px;top:53px;width:1px;height:24px;background:#a0a0a0"></div>
<div style="left:1217px;top:53px;width:1px;height:24px;background:#fff"></div>
<div style="left:2px;top:79px;width:1755px;height:1px;background:#a0a0a0"></div>
<div style="left:4px;top:81px;width:118px;height:17px;background:#fff;border:1px solid #6c6c6c;box-shadow:inset 1px 1px 0 #a0a0a0"></div>
<span class="t" style="left:7px;top:85px;">ЛС1</span>
<div style="left:122px;top:80px;width:1px;height:19px;background:#fff"></div>
<div style="left:182px;top:80px;width:1px;height:19px;background:#a0a0a0"></div>
<div style="left:183px;top:80px;width:1px;height:19px;background:#fff"></div>
<span class="mono" style="left:187px;top:83px;">Уровень цен: 10 304,86</span>
<span class="mono" style="left:402.5px;top:83px;">Уровень цен: 10 106,91</span>
<div style="left:2px;top:99px;width:1755px;height:1px;background:#a0a0a0"></div>
<div style="left:2px;top:100px;width:1755px;height:1px;background:#fff"></div>
<div style="left:1716px;top:80px;width:1px;height:19px;background:#fff"></div>
<svg style="left:1719px;top:83px" width="11" height="17" viewBox="0 0 11 17"><path d="M2 6.500l3.500-3.500L9 6.500M2 11l3.500 3.500L9 11" fill="none" stroke="#c0c0c0" stroke-width="1.600"/></svg>
<div style="left:1739px;top:83px;width:14px;height:14px;background:linear-gradient(#ff5a5a,#e01010 50%,#c80000);border:1px solid #a81010;border-radius:2px"></div>
<svg style="left:1742px;top:86px" width="8" height="8" viewBox="0 0 8 8"><path d="M1 1l6 6M7 1L1 7" stroke="#fff" stroke-width="2.200"/></svg>
<div style="left:2px;top:104px;width:1314px;height:1px;background:#fff"></div>
<div style="left:2px;top:105px;width:1314px;height:1px;background:#e3e3e3"></div>
<div style="left:5px;top:108px;width:1311px;height:622px;background:#fff;border-left:1px solid #8c8c8c;border-top:1px solid #8c8c8c;border-right:2px solid #6a6a6a;border-bottom:none"></div>
<div style="left:1316px;top:104px;width:1px;height:647px;background:#a0a0a0"></div>
<div style="left:6px;top:108px;width:1288px;height:37px;background:#f0f0f0"></div>
<div style="left:6px;top:108px;width:1288px;height:1px;background:#8c8c8c"></div>
<div style="left:6px;top:109px;width:12px;height:36px;background:#f0f0f0;border-right:1px solid #808080;border-bottom:1px solid #808080;box-shadow:inset 1px 1px 0 #fff"></div>
<div style="left:18px;top:109px;width:32px;height:36px;background:#f0f0f0;border-right:1px solid #808080;border-bottom:1px solid #808080;box-shadow:inset 1px 1px 0 #fff"></div>
<span class="t" style="left:21px;top:122px;">Тип</span>
<div style="left:50px;top:109px;width:63px;height:36px;background:#f0f0f0;border-right:1px solid #808080;border-bottom:1px solid #808080;box-shadow:inset 1px 1px 0 #fff"></div>
<span class="t" style="left:52px;top:122px;">Утвержден</span>
<div style="left:113px;top:109px;width:38px;height:36px;background:#f0f0f0;border-right:1px solid #808080;border-bottom:1px solid #808080;box-shadow:inset 1px 1px 0 #fff"></div>
<span class="t" style="left:115px;top:122px;font-weight:bold;letter-spacing:0.6px;">№п/п</span>
<div style="left:151px;top:109px;width:54px;height:36px;background:#f0f0f0;border-right:1px solid #808080;border-bottom:1px solid #808080;box-shadow:inset 1px 1px 0 #fff"></div>
<span class="t" style="left:153px;top:115px;">Связь с</span>
<span class="t" style="left:153px;top:128px;">ВОР</span>
<div style="left:205px;top:109px;width:113px;height:36px;background:#f0f0f0;border-right:1px solid #808080;border-bottom:1px solid #808080;box-shadow:inset 1px 1px 0 #fff"></div>
<span class="t" style="left:207px;top:122px;">Обоснование</span>
<div style="left:318px;top:109px;width:231px;height:36px;background:#f0f0f0;border-right:1px solid #808080;border-bottom:1px solid #808080;box-shadow:inset 1px 1px 0 #fff"></div>
<span class="t" style="left:320px;top:122px;">Наименование</span>
<div style="left:549px;top:109px;width:67px;height:36px;background:#f0f0f0;border-right:1px solid #808080;border-bottom:1px solid #808080;box-shadow:inset 1px 1px 0 #fff"></div>
<span class="t" style="left:551px;top:115px;">Ед.изм.</span>
<span class="t" style="left:551px;top:128px;">(краткая)</span>
<div style="left:616px;top:109px;width:169px;height:18px;background:#f0f0f0;border-right:1px solid #808080;border-bottom:1px solid #808080;box-shadow:inset 1px 1px 0 #fff"></div>
<span class="t" style="left:618px;top:113px;">Количество</span>
<div style="left:616px;top:127px;width:81px;height:18px;background:#f0f0f0;border-right:1px solid #808080;border-bottom:1px solid #808080;box-shadow:inset 1px 1px 0 #fff"></div>
<span class="t" style="left:618px;top:131px;">Всего с коэф.</span>
<div style="left:697px;top:127px;width:88px;height:18px;background:#f0f0f0;border-right:1px solid #808080;border-bottom:1px solid #808080;box-shadow:inset 1px 1px 0 #fff"></div>
<span class="t" style="left:699px;top:131px;">Норма расхода</span>
<div style="left:785px;top:109px;width:510px;height:18px;background:#f0f0f0;border-right:1px solid #808080;border-bottom:1px solid #808080;box-shadow:inset 1px 1px 0 #fff"></div>
<span class="t" style="left:787px;top:113px;">Уровень цен</span>
<div style="left:785px;top:127px;width:89px;height:18px;background:#b9dcb9;border-right:1px solid #808080;border-bottom:1px solid #808080;box-shadow:inset 1px 1px 0 #fff"></div>
<span class="t" style="left:787px;top:131px;">Всего</span>
<div style="left:874px;top:127px;width:93px;height:18px;background:#b9dcb9;border-right:1px solid #808080;border-bottom:1px solid #808080;box-shadow:inset 1px 1px 0 #fff"></div>
<span class="t" style="left:876px;top:131px;">ПЗ</span>
<div style="left:967px;top:127px;width:66px;height:18px;background:#b9dcb9;border-right:1px solid #808080;border-bottom:1px solid #808080;box-shadow:inset 1px 1px 0 #fff"></div>
<span class="t" style="left:969px;top:131px;">ОЗП</span>
<div style="left:1033px;top:127px;width:66px;height:18px;background:#b9dcb9;border-right:1px solid #808080;border-bottom:1px solid #808080;box-shadow:inset 1px 1px 0 #fff"></div>
<span class="t" style="left:1035px;top:131px;">ЭММ</span>
<div style="left:1099px;top:127px;width:66px;height:18px;background:#b9dcb9;border-right:1px solid #808080;border-bottom:1px solid #808080;box-shadow:inset 1px 1px 0 #fff"></div>
<span class="t" style="left:1101px;top:131px;">ЗПМ</span>
<div style="left:1165px;top:127px;width:66px;height:18px;background:#b9dcb9;border-right:1px solid #808080;border-bottom:1px solid #808080;box-shadow:inset 1px 1px 0 #fff"></div>
<span class="t" style="left:1167px;top:131px;">СтМат</span>
<div style="left:1231px;top:127px;width:64px;height:18px;background:#b9dcb9;border-right:1px solid #808080;border-bottom:1px solid #808080;box-shadow:inset 1px 1px 0 #fff"></div>
<span class="t" style="left:1233px;top:131px;">Прочие</span>
<div style="left:6px;top:145px;width:12px;height:40px;background:#f0f0f0;border-bottom:1px solid #808080;border-right:1px solid #808080"></div>
<div style="left:18px;top:145px;width:1277px;height:39px;background:#ebebff"></div>
<div style="left:18px;top:184px;width:1277px;height:1px;background:#c0c0c0"></div>
<div style="left:18px;top:184px;width:299px;height:1px;background:#808080"></div>
<div style="left:49px;top:145px;width:1px;height:40px;background:#808080"></div>
<div style="left:112px;top:145px;width:1px;height:40px;background:#808080"></div>
<div style="left:150px;top:145px;width:1px;height:40px;background:#808080"></div>
<div style="left:204px;top:145px;width:1px;height:40px;background:#808080"></div>
<div style="left:317px;top:145px;width:1px;height:40px;background:#c0c0c0"></div>
<div style="left:548px;top:145px;width:1px;height:40px;background:#c0c0c0"></div>
<div style="left:615px;top:145px;width:1px;height:40px;background:#c0c0c0"></div>
<div style="left:696px;top:145px;width:1px;height:40px;background:#c0c0c0"></div>
<div style="left:784px;top:145px;width:1px;height:40px;background:#c0c0c0"></div>
<div style="left:873px;top:145px;width:1px;height:40px;background:#c0c0c0"></div>
<div style="left:966px;top:145px;width:1px;height:40px;background:#c0c0c0"></div>
<div style="left:1032px;top:145px;width:1px;height:40px;background:#c0c0c0"></div>
<div style="left:1098px;top:145px;width:1px;height:40px;background:#c0c0c0"></div>
<div style="left:1164px;top:145px;width:1px;height:40px;background:#c0c0c0"></div>
<div style="left:1230px;top:145px;width:1px;height:40px;background:#c0c0c0"></div>
<div style="left:1294px;top:145px;width:1px;height:40px;background:#c0c0c0"></div>
<div style="left:76px;top:159px;width:11px;height:11px;background:#fff;border:1px solid #b0b0b0"></div>
<span class="t" style="left:115px;top:148px;color:#0000e0">ЛС1</span>
<span class="t" style="left:206px;top:147px;font-weight:bold;color:#0a0aff;letter-spacing:.45px">Новая</span>
<span class="t" style="left:206px;top:160px;font-weight:bold;color:#0a0aff;letter-spacing:.45px">локальная</span>
<span class="t" style="left:206px;top:173px;font-weight:bold;color:#0a0aff;letter-spacing:.45px">смета</span>
<span class="t" style="left:320px;top:148px;font-weight:bold;font-size:13.600px;color:#0a0aff">Новая локальная смета</span>
<svg style="left:284px;top:146px" width="32" height="29" viewBox="0 0 32 29"><defs><linearGradient id="lsg" x1="0" y1="1" x2="1" y2="0"><stop offset="0" stop-color="#28b858"/><stop offset=".6" stop-color="#58d888"/><stop offset="1" stop-color="#38c068"/></linearGradient></defs><path d="M1 17.300L22.500 24.800l.2 1.900L1 19.800z" fill="#c0d0f4" stroke="#2c6c48" stroke-width=".5"/><path d="M30.300 8.800L22.500 24.800l.9 1.500L31.200 10z" fill="#88a8e4"/><path d="M1 17.300L18 13.800 30.300 8.800 22.500 24.800z" fill="#fcfcf4"/><path d="M.9 16.600L16.400 2.500 30.800 .5 30.200 8.600 18 13.900 1.200 17.500z" fill="url(#lsg)"/><path d="M19 4.500l6-1.200" stroke="#a8ecc0" stroke-width="1"/><path d="M.9 16.600l.3 2.800" stroke="#185030" stroke-width="1"/><text x="13.500" y="19.300" font-size="7" font-family="Liberation Sans,sans-serif" font-style="italic" fill="#000" transform="rotate(17 13.500 19.300)">ЛС</text></svg>
<div style="left:6px;top:185px;width:12px;height:40px;background:#f0f0f0;border-bottom:1px solid #808080;border-right:1px solid #808080"></div>
<div style="left:18px;top:185px;width:1277px;height:39px;background:#fff"></div>
<div style="left:18px;top:224px;width:1277px;height:1px;background:#c0c0c0"></div>
<div style="left:18px;top:224px;width:299px;height:1px;background:#808080"></div>
<div style="left:49px;top:185px;width:1px;height:40px;background:#808080"></div>
<div style="left:112px;top:185px;width:1px;height:40px;background:#808080"></div>
<div style="left:150px;top:185px;width:1px;height:40px;background:#808080"></div>
<div style="left:204px;top:185px;width:1px;height:40px;background:#808080"></div>
<div style="left:317px;top:185px;width:1px;height:40px;background:#c0c0c0"></div>
<div style="left:548px;top:185px;width:1px;height:40px;background:#c0c0c0"></div>
<div style="left:615px;top:185px;width:1px;height:40px;background:#c0c0c0"></div>
<div style="left:696px;top:185px;width:1px;height:40px;background:#c0c0c0"></div>
<div style="left:784px;top:185px;width:1px;height:40px;background:#c0c0c0"></div>
<div style="left:873px;top:185px;width:1px;height:40px;background:#c0c0c0"></div>
<div style="left:966px;top:185px;width:1px;height:40px;background:#c0c0c0"></div>
<div style="left:1032px;top:185px;width:1px;height:40px;background:#c0c0c0"></div>
<div style="left:1098px;top:185px;width:1px;height:40px;background:#c0c0c0"></div>
<div style="left:1164px;top:185px;width:1px;height:40px;background:#c0c0c0"></div>
<div style="left:1230px;top:185px;width:1px;height:40px;background:#c0c0c0"></div>
<div style="left:1294px;top:185px;width:1px;height:40px;background:#c0c0c0"></div>
<div style="left:76px;top:199px;width:11px;height:11px;background:#fff;border:1px solid #b0b0b0"></div>
<span class="t" style="left:115px;top:188px;">1</span>
<span class="t" style="left:207px;top:188px;letter-spacing:-.2px">53-01-001-07</span>
<svg style="left:306px;top:210px" width="6" height="12" viewBox="0 0 6 12"><rect x=".8" y=".8" width="4.400" height="10.400" rx="2.200" fill="#f4f4f4" stroke="#383838" stroke-width="1.300"/><path d="M3 3.500v5" stroke="#888" stroke-width="1"/></svg>
<span class="t" style="left:320px;top:188px;letter-spacing:.12px">Разборка бревенчатых: оштукатуренных</span>
<span class="t" style="left:320px;top:201px;letter-spacing:.12px">стен</span>
<svg style="left:691px;top:185px" width="6" height="6" viewBox="0 0 6 6"><path d="M0 0h6v6z" fill="#00b400"/></svg>
<span class="t" style="left:551px;top:188px;">100 м2</span>
<span class="t" style="left:618px;top:188px;">0,07</span>
<span class="t r" style="left:780px;width:90px;top:188px">952,16</span>
<span class="t r" style="left:873px;width:90px;top:188px">611,41</span>
<span class="t r" style="left:939px;width:90px;top:188px">0</span>
<span class="t r" style="left:1005px;width:90px;top:188px">611,41</span>
<span class="t r" style="left:1071px;width:90px;top:188px">236,63</span>
<span class="t r" style="left:1137px;width:90px;top:188px">0</span>
<span class="t r" style="left:1203px;width:90px;top:188px">0</span>
<div style="left:6px;top:225px;width:12px;height:40px;background:#f0f0f0;border-bottom:1px solid #808080;border-right:1px solid #808080"></div>
<div style="left:18px;top:225px;width:1277px;height:39px;background:#fff"></div>
<div style="left:18px;top:264px;width:1277px;height:1px;background:#c0c0c0"></div>
<div style="left:18px;top:264px;width:299px;height:1px;background:#808080"></div>
<div style="left:49px;top:225px;width:1px;height:40px;background:#808080"></div>
<div style="left:112px;top:225px;width:1px;height:40px;background:#808080"></div>
<div style="left:150px;top:225px;width:1px;height:40px;background:#808080"></div>
<div style="left:204px;top:225px;width:1px;height:40px;background:#808080"></div>
<div style="left:317px;top:225px;width:1px;height:40px;background:#c0c0c0"></div>
<div style="left:548px;top:225px;width:1px;height:40px;background:#c0c0c0"></div>
<div style="left:615px;top:225px;width:1px;height:40px;background:#c0c0c0"></div>
<div style="left:696px;top:225px;width:1px;height:40px;background:#c0c0c0"></div>
<div style="left:784px;top:225px;width:1px;height:40px;background:#c0c0c0"></div>
<div style="left:873px;top:225px;width:1px;height:40px;background:#c0c0c0"></div>
<div style="left:966px;top:225px;width:1px;height:40px;background:#c0c0c0"></div>
<div style="left:1032px;top:225px;width:1px;height:40px;background:#c0c0c0"></div>
<div style="left:1098px;top:225px;width:1px;height:40px;background:#c0c0c0"></div>
<div style="left:1164px;top:225px;width:1px;height:40px;background:#c0c0c0"></div>
<div style="left:1230px;top:225px;width:1px;height:40px;background:#c0c0c0"></div>
<div style="left:1294px;top:225px;width:1px;height:40px;background:#c0c0c0"></div>
<div style="left:76px;top:239px;width:11px;height:11px;background:#fff;border:1px solid #b0b0b0"></div>
<span class="t" style="left:115px;top:228px;">2</span>
<span class="t" style="left:207px;top:228px;letter-spacing:-.2px">15-01-001-05</span>
<svg style="left:306px;top:250px" width="6" height="12" viewBox="0 0 6 12"><rect x=".8" y=".8" width="4.400" height="10.400" rx="2.200" fill="#f4f4f4" stroke="#383838" stroke-width="1.300"/><path d="M3 3.500v5" stroke="#888" stroke-width="1"/></svg>
<span class="t" style="left:320px;top:228px;letter-spacing:.12px">Облицовка стен гранитными плитами</span>
<span class="t" style="left:320px;top:241px;letter-spacing:.12px">полированными толщиной до 40 мм при</span>
<svg style="left:691px;top:225px" width="6" height="6" viewBox="0 0 6 6"><path d="M0 0h6v6z" fill="#00b400"/></svg>
<span class="t" style="left:551px;top:228px;">100 м2</span>
<span class="t" style="left:618px;top:228px;">0,08</span>
<span class="t r" style="left:780px;width:90px;top:228px">1 446,93</span>
<span class="t r" style="left:873px;width:90px;top:228px">1 289,65</span>
<span class="t r" style="left:939px;width:90px;top:228px">0</span>
<span class="t r" style="left:1005px;width:90px;top:228px">78,47</span>
<span class="t r" style="left:1071px;width:90px;top:228px">105,56</span>
<span class="t r" style="left:1137px;width:90px;top:228px">1 211,18</span>
<span class="t r" style="left:1203px;width:90px;top:228px">0</span>
<div style="left:6px;top:265px;width:12px;height:40px;background:#f0f0f0;border-bottom:1px solid #808080;border-right:1px solid #808080"></div>
<div style="left:18px;top:265px;width:1277px;height:39px;background:#fff"></div>
<div style="left:18px;top:304px;width:1277px;height:1px;background:#c0c0c0"></div>
<div style="left:18px;top:304px;width:299px;height:1px;background:#808080"></div>
<div style="left:49px;top:265px;width:1px;height:40px;background:#808080"></div>
<div style="left:112px;top:265px;width:1px;height:40px;background:#808080"></div>
<div style="left:150px;top:265px;width:1px;height:40px;background:#808080"></div>
<div style="left:204px;top:265px;width:1px;height:40px;background:#808080"></div>
<div style="left:317px;top:265px;width:1px;height:40px;background:#c0c0c0"></div>
<div style="left:548px;top:265px;width:1px;height:40px;background:#c0c0c0"></div>
<div style="left:615px;top:265px;width:1px;height:40px;background:#c0c0c0"></div>
<div style="left:696px;top:265px;width:1px;height:40px;background:#c0c0c0"></div>
<div style="left:784px;top:265px;width:1px;height:40px;background:#c0c0c0"></div>
<div style="left:873px;top:265px;width:1px;height:40px;background:#c0c0c0"></div>
<div style="left:966px;top:265px;width:1px;height:40px;background:#c0c0c0"></div>
<div style="left:1032px;top:265px;width:1px;height:40px;background:#c0c0c0"></div>
<div style="left:1098px;top:265px;width:1px;height:40px;background:#c0c0c0"></div>
<div style="left:1164px;top:265px;width:1px;height:40px;background:#c0c0c0"></div>
<div style="left:1230px;top:265px;width:1px;height:40px;background:#c0c0c0"></div>
<div style="left:1294px;top:265px;width:1px;height:40px;background:#c0c0c0"></div>
<div style="left:76px;top:279px;width:11px;height:11px;background:#fff;border:1px solid #b0b0b0"></div>
<span class="t" style="left:115px;top:268px;">3</span>
<span class="t" style="left:207px;top:268px;letter-spacing:-.2px">04-01-001-02</span>
<svg style="left:306px;top:290px" width="6" height="12" viewBox="0 0 6 12"><rect x=".8" y=".8" width="4.400" height="10.400" rx="2.200" fill="#f4f4f4" stroke="#383838" stroke-width="1.300"/><path d="M3 3.500v5" stroke="#888" stroke-width="1"/></svg>
<span class="t" style="left:320px;top:268px;letter-spacing:.12px">Роторное бурение скважин с прямой</span>
<span class="t" style="left:320px;top:281px;letter-spacing:.12px">промывкой станками с дизельным</span>
<svg style="left:691px;top:265px" width="6" height="6" viewBox="0 0 6 6"><path d="M0 0h6v6z" fill="#00b400"/></svg>
<span class="t" style="left:551px;top:268px;">100 м</span>
<span class="t" style="left:618px;top:268px;">0,09</span>
<span class="t r" style="left:780px;width:90px;top:268px">6 864,87</span>
<span class="t r" style="left:873px;width:90px;top:268px">4 491,92</span>
<span class="t r" style="left:939px;width:90px;top:268px">0</span>
<span class="t r" style="left:1005px;width:90px;top:268px">4 409,82</span>
<span class="t r" style="left:1071px;width:90px;top:268px">1 571,49</span>
<span class="t r" style="left:1137px;width:90px;top:268px">82,1</span>
<span class="t r" style="left:1203px;width:90px;top:268px">0</span>
<div style="left:6px;top:305px;width:12px;height:40px;background:#f0f0f0;border-bottom:1px solid #808080;border-right:1px solid #808080"></div>
<div style="left:18px;top:305px;width:1277px;height:39px;background:#fff"></div>
<div style="left:18px;top:344px;width:1277px;height:1px;background:#c0c0c0"></div>
<div style="left:18px;top:344px;width:299px;height:1px;background:#808080"></div>
<div style="left:49px;top:305px;width:1px;height:40px;background:#808080"></div>
<div style="left:112px;top:305px;width:1px;height:40px;background:#808080"></div>
<div style="left:150px;top:305px;width:1px;height:40px;background:#808080"></div>
<div style="left:204px;top:305px;width:1px;height:40px;background:#808080"></div>
<div style="left:317px;top:305px;width:1px;height:40px;background:#c0c0c0"></div>
<div style="left:548px;top:305px;width:1px;height:40px;background:#c0c0c0"></div>
<div style="left:615px;top:305px;width:1px;height:40px;background:#c0c0c0"></div>
<div style="left:696px;top:305px;width:1px;height:40px;background:#c0c0c0"></div>
<div style="left:784px;top:305px;width:1px;height:40px;background:#c0c0c0"></div>
<div style="left:873px;top:305px;width:1px;height:40px;background:#c0c0c0"></div>
<div style="left:966px;top:305px;width:1px;height:40px;background:#c0c0c0"></div>
<div style="left:1032px;top:305px;width:1px;height:40px;background:#c0c0c0"></div>
<div style="left:1098px;top:305px;width:1px;height:40px;background:#c0c0c0"></div>
<div style="left:1164px;top:305px;width:1px;height:40px;background:#c0c0c0"></div>
<div style="left:1230px;top:305px;width:1px;height:40px;background:#c0c0c0"></div>
<div style="left:1294px;top:305px;width:1px;height:40px;background:#c0c0c0"></div>
<div style="left:76px;top:319px;width:11px;height:11px;background:#fff;border:1px solid #b0b0b0"></div>
<span class="t" style="left:115px;top:308px;">4</span>
<span class="t" style="left:207px;top:308px;letter-spacing:-.2px">01-01-001-03</span>
<svg style="left:306px;top:330px" width="6" height="12" viewBox="0 0 6 12"><rect x=".8" y=".8" width="4.400" height="10.400" rx="2.200" fill="#f4f4f4" stroke="#383838" stroke-width="1.300"/><path d="M3 3.500v5" stroke="#888" stroke-width="1"/></svg>
<span class="t" style="left:320px;top:308px;letter-spacing:.12px">Разработка грунта в отвал экскаваторами</span>
<span class="t" style="left:320px;top:321px;letter-spacing:.12px">"драглайн" одноковшовыми</span>
<svg style="left:691px;top:305px" width="6" height="6" viewBox="0 0 6 6"><path d="M0 0h6v6z" fill="#00b400"/></svg>
<span class="t" style="left:551px;top:308px;">1000 м3</span>
<span class="t" style="left:618px;top:308px;">0,004</span>
<span class="t r" style="left:780px;width:90px;top:308px">816,9</span>
<span class="t r" style="left:873px;width:90px;top:308px">789,08</span>
<span class="t r" style="left:939px;width:90px;top:308px">0</span>
<span class="t r" style="left:1005px;width:90px;top:308px">789,08</span>
<span class="t r" style="left:1071px;width:90px;top:308px">20,16</span>
<span class="t r" style="left:1137px;width:90px;top:308px">0</span>
<span class="t r" style="left:1203px;width:90px;top:308px">0</span>
<div style="left:6px;top:345px;width:12px;height:40px;background:#f0f0f0;border-bottom:1px solid #808080;border-right:1px solid #808080"></div>
<div style="left:18px;top:345px;width:1277px;height:39px;background:#ffe9e9"></div>
<div style="left:18px;top:384px;width:1277px;height:1px;background:#c0c0c0"></div>
<div style="left:18px;top:384px;width:299px;height:1px;background:#808080"></div>
<div style="left:49px;top:345px;width:1px;height:40px;background:#808080"></div>
<div style="left:112px;top:345px;width:1px;height:40px;background:#808080"></div>
<div style="left:150px;top:345px;width:1px;height:40px;background:#808080"></div>
<div style="left:204px;top:345px;width:1px;height:40px;background:#808080"></div>
<div style="left:317px;top:345px;width:1px;height:40px;background:#c0c0c0"></div>
<div style="left:548px;top:345px;width:1px;height:40px;background:#c0c0c0"></div>
<div style="left:615px;top:345px;width:1px;height:40px;background:#c0c0c0"></div>
<div style="left:696px;top:345px;width:1px;height:40px;background:#c0c0c0"></div>
<div style="left:784px;top:345px;width:1px;height:40px;background:#c0c0c0"></div>
<div style="left:873px;top:345px;width:1px;height:40px;background:#c0c0c0"></div>
<div style="left:966px;top:345px;width:1px;height:40px;background:#c0c0c0"></div>
<div style="left:1032px;top:345px;width:1px;height:40px;background:#c0c0c0"></div>
<div style="left:1098px;top:345px;width:1px;height:40px;background:#c0c0c0"></div>
<div style="left:1164px;top:345px;width:1px;height:40px;background:#c0c0c0"></div>
<div style="left:1230px;top:345px;width:1px;height:40px;background:#c0c0c0"></div>
<div style="left:1294px;top:345px;width:1px;height:40px;background:#c0c0c0"></div>
<div style="left:76px;top:359px;width:11px;height:11px;background:#fff;border:1px solid #b0b0b0"></div>
<span class="t" style="left:115px;top:348px;">5</span>
<span class="t" style="left:207px;top:348px;letter-spacing:-.2px">ТЦ_10.00.00.00_50_5</span>
<svg style="left:306px;top:370px" width="6" height="12" viewBox="0 0 6 12"><rect x=".8" y=".8" width="4.400" height="10.400" rx="2.200" fill="#f4f4f4" stroke="#383838" stroke-width="1.300"/><path d="M3 3.500v5" stroke="#888" stroke-width="1"/></svg>
<div style="left:318px;top:345px;width:230px;height:39px;background:#a0a0a0"></div>
<span class="t" style="left:320px;top:348px;color:#fff">Кирпич</span>
<svg style="left:9px;top:359px" width="7" height="12" viewBox="0 0 7 12"><path d="M0 0l6.500 6L0 12z" fill="#000"/></svg>
<svg style="left:25px;top:356px" width="16" height="16" viewBox="0 0 16 16"><g fill="#f07010" stroke="#c04c00" stroke-width=".5"><rect x="5.5" y="5.2" width="5" height="2.300" rx="1.100"/><rect x="2.8" y="7.6" width="5" height="2.300" rx="1.100"/><rect x="8.2" y="7.6" width="5" height="2.300" rx="1.100"/><rect x="0.2" y="10" width="5" height="2.300" rx="1.100"/><rect x="5.5" y="10" width="5" height="2.300" rx="1.100"/><rect x="10.8" y="10" width="5" height="2.300" rx="1.100"/></g><path d="M6.7 6.0h2.600" stroke="#ffb060" stroke-width=".6"/><path d="M4.0 8.4h2.600" stroke="#ffb060" stroke-width=".6"/><path d="M9.399999999999999 8.4h2.600" stroke="#ffb060" stroke-width=".6"/><path d="M1.4 10.8h2.600" stroke="#ffb060" stroke-width=".6"/><path d="M6.7 10.8h2.600" stroke="#ffb060" stroke-width=".6"/><path d="M12.0 10.8h2.600" stroke="#ffb060" stroke-width=".6"/></svg>
<span class="t" style="left:551px;top:348px;">ШТ</span>
<span class="t" style="left:618px;top:348px;">1</span>
<span class="t r" style="left:780px;width:90px;top:348px">224</span>
<span class="t r" style="left:873px;width:90px;top:348px">224</span>
<span class="t r" style="left:939px;width:90px;top:348px">0</span>
<span class="t r" style="left:1005px;width:90px;top:348px">0</span>
<span class="t r" style="left:1071px;width:90px;top:348px">0</span>
<span class="t r" style="left:1137px;width:90px;top:348px">224</span>
<span class="t r" style="left:1203px;width:90px;top:348px">0</span>
<div style="left:1295px;top:109px;width:16px;height:602px;background:#f0f0f0"></div>
<svg style="left:1298.0px;top:115px" width="9" height="6" viewBox="0 0 9 6"><path d="M1 5l3.500-3.500L8 5" fill="none" stroke="#606060" stroke-width="1.900"/></svg>
<div style="left:1295px;top:385px;width:15px;height:309px;background:#cdcdcd"></div>
<svg style="left:1298.0px;top:699.5px" width="9" height="6" viewBox="0 0 9 6"><path d="M1 1l3.500 3.500L8 1" fill="none" stroke="#606060" stroke-width="1.900"/></svg>
<div style="left:6px;top:712px;width:1288px;height:16px;background:#f0f0f0"></div>
<div style="left:1295px;top:712px;width:16px;height:16px;background:#f0f0f0"></div>
<svg style="left:11px;top:715.0px" width="6" height="9" viewBox="0 0 6 9"><path d="M5 1L1.500 4.500 5 8" fill="none" stroke="#606060" stroke-width="1.900"/></svg>
<div style="left:23px;top:712px;width:17px;height:15px;background:#cdcdcd"></div>
<svg style="left:1282.5px;top:715.0px" width="6" height="9" viewBox="0 0 6 9"><path d="M1 1l3.500 3.500L1 8" fill="none" stroke="#606060" stroke-width="1.900"/></svg>
<div style="left:1314px;top:104px;width:1px;height:5px;background:#6a6a6a"></div>
<div style="left:1315px;top:104px;width:1px;height:5px;background:#6a6a6a"></div>
<div style="left:2px;top:729px;width:1314px;height:22px;background:#f0f0f0"></div>
<div style="left:77px;top:729px;width:1239px;height:1px;background:#8c8c8c"></div>
<div style="left:77px;top:730px;width:1239px;height:1px;background:#696969"></div>
<div style="left:76px;top:730px;width:1px;height:20px;background:#a0a0a0"></div>
<div style="left:77px;top:730px;width:1px;height:21px;background:#696969"></div>
<div style="left:3px;top:749px;width:74px;height:1px;background:#a8a8a8"></div>
<div style="left:3px;top:750px;width:75px;height:1px;background:#696969"></div>
<div style="left:2px;top:728px;width:1px;height:23px;background:#c8c8c8"></div>
<span class="t" style="left:9.5px;top:737px;">Полный вид</span>
<div style="left:78px;top:731px;width:106px;height:18px;background:#f0f0f0;border-left:1px solid #fff;border-right:1px solid #696969;border-bottom:1px solid #696969;box-shadow:inset -1px -1px 0 #a0a0a0;border-radius:0 0 3px 0"></div>
<span class="t" style="left:82px;top:735px;letter-spacing:-.1px">Сокращенный вид</span>
<div style="left:185px;top:731px;width:68px;height:18px;background:#f0f0f0;border-left:1px solid #fff;border-right:1px solid #696969;border-bottom:1px solid #696969;box-shadow:inset -1px -1px 0 #a0a0a0;border-radius:0 0 3px 0"></div>
<span class="t" style="left:189px;top:735px;letter-spacing:-.1px">Вид строки</span>
<div style="left:254px;top:731px;width:101px;height:18px;background:#f0f0f0;border-left:1px solid #fff;border-right:1px solid #696969;border-bottom:1px solid #696969;box-shadow:inset -1px -1px 0 #a0a0a0;border-radius:0 0 3px 0"></div>
<span class="t" style="left:258px;top:735px;letter-spacing:-.1px">Объектная смета</span>
<div style="left:356px;top:731px;width:86px;height:18px;background:#f0f0f0;border-left:1px solid #fff;border-right:1px solid #696969;border-bottom:1px solid #696969;box-shadow:inset -1px -1px 0 #a0a0a0;border-radius:0 0 3px 0"></div>
<span class="t" style="left:360px;top:735px;letter-spacing:-.1px">Предпросмотр</span>
<div style="left:78px;top:751px;width:1679px;height:1px;background:#a0a0a0"></div>
<div style="left:1317px;top:104px;width:1px;height:650px;background:#fff"></div>
<div style="left:1322px;top:108px;width:421px;height:2px;background:#fff"></div>
<div style="left:1322px;top:110px;width:421px;height:1px;background:#a0a0a0"></div>
<div style="left:1322px;top:111px;width:421px;height:2px;background:#fff"></div>
<div style="left:1322px;top:113px;width:421px;height:1px;background:#a0a0a0"></div>
<div style="left:1746px;top:106px;width:10px;height:10px;background:#f0f0f0;border:1px solid;border-color:#fff #808080 #808080 #fff"></div>
<svg style="left:1748px;top:107px" width="7" height="7" viewBox="0 0 7 7"><path d="M.5 .5l6 6M6.500 .5l-6 6" stroke="#000" stroke-width="1"/></svg>
<div class="btn" style="left:1324px;top:120px;width:80px;height:19px;"></div>
<span class="t" style="left:1324px;top:124px;width:80px;text-align:center;color:#000;font-size:11px">Очистить</span>
<div class="btn" style="left:1408px;top:120px;width:90px;height:19px;"></div>
<span class="t" style="left:1408px;top:124px;width:90px;text-align:center;color:#000;font-size:11px">Справочник</span>
<div style="left:1502px;top:123px;width:13px;height:13px;background:#fff;border:1px solid;border-color:#808080 #fff #fff #808080;box-shadow:inset 1px 1px 0 #404040, inset -1px -1px 0 #e0e0e0"></div>
<svg style="left:1505.0px;top:126.0px" width="7" height="7" viewBox="0 0 7 7.500"><path d="M0 2l2.500 2.500L7 0v3L2.500 7.500 0 5z" fill="#000"/></svg>
<span class="t" style="left:1520.5px;top:124px;">Добавление</span>
<div style="left:1325px;top:147px;width:318px;height:15px;background:#fff"></div>
<div style="left:1627px;top:147px;width:16px;height:15px;background:#f4f4f4"></div>
<svg style="left:1630.5px;top:152.5px" width="7" height="4" viewBox="0 0 7 4"><path d="M0 0h7L3.500 4z" fill="#000"/></svg>
<div class="btn" style="left:1648px;top:145px;width:80px;height:19px;"></div>
<span class="t" style="left:1648px;top:149px;width:80px;text-align:center;color:#a0a0a0;font-size:11px">Добавить</span>
<div style="left:1732px;top:148px;width:13px;height:13px;background:#f0f0f0;border:1px solid;border-color:#808080 #fff #fff #808080;box-shadow:inset 1px 1px 0 #404040, inset -1px -1px 0 #e0e0e0"></div>
<svg style="left:1735.0px;top:151.0px" width="7" height="7" viewBox="0 0 7 7.500"><path d="M0 2l2.500 2.500L7 0v3L2.500 7.500 0 5z" fill="#a0a0a0"/></svg>
<div style="left:1324px;top:169px;width:428px;height:212px;background:#f0f0f0;border:1px solid;border-color:#696969 #fff #fff #696969;box-shadow:inset 1px 1px 0 #a0a0a0"></div>
<div style="left:1326px;top:171px;width:88px;height:19px;background:#f0f0f0"></div>
<div style="left:1719px;top:171px;width:15px;height:19px;background:#f0f0f0"></div>
<span class="t" style="left:1334.5px;top:175px;">Объем</span>
<div style="left:1416px;top:173px;width:300px;height:15px;background:#fff"></div>
<div style="left:1703px;top:173px;width:13px;height:15px;background:#f4f4f4"></div>
<svg style="left:1705.5px;top:179px" width="7" height="4" viewBox="0 0 7 4"><path d="M0 0h7L3.500 4z" fill="#000"/></svg>
<div style="left:1720px;top:173px;width:12px;height:12px;background:#fff;border:1px solid;border-color:#808080 #fff #fff #808080;box-shadow:inset 1px 1px 0 #404040, inset -1px -1px 0 #e0e0e0"></div>
<div style="left:1326px;top:190px;width:88px;height:19px;background:#f0f0f0"></div>
<div style="left:1719px;top:190px;width:15px;height:19px;background:#f0f0f0"></div>
<span class="t" style="left:1334.5px;top:194px;">Сметная цена</span>
<div style="left:1416px;top:192px;width:300px;height:15px;background:#fff"></div>
<div style="left:1703px;top:192px;width:13px;height:15px;background:#f4f4f4"></div>
<svg style="left:1705.5px;top:198px" width="7" height="4" viewBox="0 0 7 4"><path d="M0 0h7L3.500 4z" fill="#000"/></svg>
<div style="left:1720px;top:192px;width:12px;height:12px;background:#fff;border:1px solid;border-color:#808080 #fff #fff #808080;box-shadow:inset 1px 1px 0 #404040, inset -1px -1px 0 #e0e0e0"></div>
<svg style="left:1722.5px;top:194.5px" width="7" height="7" viewBox="0 0 7 7.500"><path d="M0 2l2.500 2.500L7 0v3L2.500 7.500 0 5z" fill="#000"/></svg>
<div style="left:1326px;top:209px;width:88px;height:19px;background:#dcfbe6"></div>
<div style="left:1719px;top:209px;width:15px;height:19px;background:#dcfbe6"></div>
<span class="t" style="left:1334.5px;top:213px;">ОЗП</span>
<div style="left:1416px;top:211px;width:300px;height:15px;background:#fff"></div>
<div style="left:1703px;top:211px;width:13px;height:15px;background:#f4f4f4"></div>
<svg style="left:1705.5px;top:217px" width="7" height="4" viewBox="0 0 7 4"><path d="M0 0h7L3.500 4z" fill="#000"/></svg>
<div style="left:1720px;top:211px;width:12px;height:12px;background:#fff;border:1px solid;border-color:#808080 #fff #fff #808080;box-shadow:inset 1px 1px 0 #404040, inset -1px -1px 0 #e0e0e0"></div>
<svg style="left:1722.5px;top:213.5px" width="7" height="7" viewBox="0 0 7 7.500"><path d="M0 2l2.500 2.500L7 0v3L2.500 7.500 0 5z" fill="#000"/></svg>
<div style="left:1326px;top:228px;width:88px;height:19px;background:#dcfbe6"></div>
<div style="left:1719px;top:228px;width:15px;height:19px;background:#dcfbe6"></div>
<span class="t" style="left:1334.5px;top:232px;">ТрудСтр</span>
<div style="left:1416px;top:230px;width:300px;height:15px;background:#fff"></div>
<div style="left:1703px;top:230px;width:13px;height:15px;background:#f4f4f4"></div>
<svg style="left:1705.5px;top:236px" width="7" height="4" viewBox="0 0 7 4"><path d="M0 0h7L3.500 4z" fill="#000"/></svg>
<div style="left:1720px;top:230px;width:12px;height:12px;background:#fff;border:1px solid;border-color:#808080 #fff #fff #808080;box-shadow:inset 1px 1px 0 #404040, inset -1px -1px 0 #e0e0e0"></div>
<svg style="left:1722.5px;top:232.5px" width="7" height="7" viewBox="0 0 7 7.500"><path d="M0 2l2.500 2.500L7 0v3L2.500 7.500 0 5z" fill="#000"/></svg>
<div style="left:1326px;top:247px;width:88px;height:19px;background:#d7e8ff"></div>
<div style="left:1719px;top:247px;width:15px;height:19px;background:#d7e8ff"></div>
<span class="t" style="left:1334.5px;top:251px;">ЭММ</span>
<div style="left:1416px;top:249px;width:300px;height:15px;background:#fff"></div>
<div style="left:1703px;top:249px;width:13px;height:15px;background:#f4f4f4"></div>
<svg style="left:1705.5px;top:255px" width="7" height="4" viewBox="0 0 7 4"><path d="M0 0h7L3.500 4z" fill="#000"/></svg>
<div style="left:1720px;top:249px;width:12px;height:12px;background:#fff;border:1px solid;border-color:#808080 #fff #fff #808080;box-shadow:inset 1px 1px 0 #404040, inset -1px -1px 0 #e0e0e0"></div>
<svg style="left:1722.5px;top:251.5px" width="7" height="7" viewBox="0 0 7 7.500"><path d="M0 2l2.500 2.500L7 0v3L2.500 7.500 0 5z" fill="#000"/></svg>
<div style="left:1326px;top:266px;width:88px;height:19px;background:#d7e8ff"></div>
<div style="left:1719px;top:266px;width:15px;height:19px;background:#d7e8ff"></div>
<span class="t" style="left:1334.5px;top:270px;">НормЭММ</span>
<div style="left:1416px;top:268px;width:300px;height:15px;background:#fff"></div>
<div style="left:1703px;top:268px;width:13px;height:15px;background:#f4f4f4"></div>
<svg style="left:1705.5px;top:274px" width="7" height="4" viewBox="0 0 7 4"><path d="M0 0h7L3.500 4z" fill="#000"/></svg>
<div style="left:1720px;top:268px;width:12px;height:12px;background:#fff;border:1px solid;border-color:#808080 #fff #fff #808080;box-shadow:inset 1px 1px 0 #404040, inset -1px -1px 0 #e0e0e0"></div>
<svg style="left:1722.5px;top:270.5px" width="7" height="7" viewBox="0 0 7 7.500"><path d="M0 2l2.500 2.500L7 0v3L2.500 7.500 0 5z" fill="#000"/></svg>
<div style="left:1326px;top:285px;width:88px;height:19px;background:#d7e8ff"></div>
<div style="left:1719px;top:285px;width:15px;height:19px;background:#d7e8ff"></div>
<span class="t" style="left:1334.5px;top:289px;">ЗПМ</span>
<div style="left:1416px;top:287px;width:300px;height:15px;background:#fff"></div>
<div style="left:1703px;top:287px;width:13px;height:15px;background:#f4f4f4"></div>
<svg style="left:1705.5px;top:293px" width="7" height="4" viewBox="0 0 7 4"><path d="M0 0h7L3.500 4z" fill="#000"/></svg>
<div style="left:1720px;top:287px;width:12px;height:12px;background:#fff;border:1px solid;border-color:#808080 #fff #fff #808080;box-shadow:inset 1px 1px 0 #404040, inset -1px -1px 0 #e0e0e0"></div>
<svg style="left:1722.5px;top:289.5px" width="7" height="7" viewBox="0 0 7 7.500"><path d="M0 2l2.500 2.500L7 0v3L2.500 7.500 0 5z" fill="#000"/></svg>
<div style="left:1326px;top:304px;width:88px;height:19px;background:#d7e8ff"></div>
<div style="left:1719px;top:304px;width:15px;height:19px;background:#d7e8ff"></div>
<span class="t" style="left:1334.5px;top:308px;">ТрудМаш</span>
<div style="left:1416px;top:306px;width:300px;height:15px;background:#fff"></div>
<div style="left:1703px;top:306px;width:13px;height:15px;background:#f4f4f4"></div>
<svg style="left:1705.5px;top:312px" width="7" height="4" viewBox="0 0 7 4"><path d="M0 0h7L3.500 4z" fill="#000"/></svg>
<div style="left:1720px;top:306px;width:12px;height:12px;background:#fff;border:1px solid;border-color:#808080 #fff #fff #808080;box-shadow:inset 1px 1px 0 #404040, inset -1px -1px 0 #e0e0e0"></div>
<svg style="left:1722.5px;top:308.5px" width="7" height="7" viewBox="0 0 7 7.500"><path d="M0 2l2.500 2.500L7 0v3L2.500 7.500 0 5z" fill="#000"/></svg>
<div style="left:1326px;top:323px;width:88px;height:19px;background:#ffe7e7"></div>
<div style="left:1719px;top:323px;width:15px;height:19px;background:#ffe7e7"></div>
<span class="t" style="left:1334.5px;top:327px;">СтМат</span>
<div style="left:1416px;top:325px;width:300px;height:15px;background:#fff"></div>
<div style="left:1703px;top:325px;width:13px;height:15px;background:#f4f4f4"></div>
<svg style="left:1705.5px;top:331px" width="7" height="4" viewBox="0 0 7 4"><path d="M0 0h7L3.500 4z" fill="#000"/></svg>
<div style="left:1720px;top:325px;width:12px;height:12px;background:#fff;border:1px solid;border-color:#808080 #fff #fff #808080;box-shadow:inset 1px 1px 0 #404040, inset -1px -1px 0 #e0e0e0"></div>
<svg style="left:1722.5px;top:327.5px" width="7" height="7" viewBox="0 0 7 7.500"><path d="M0 2l2.500 2.500L7 0v3L2.500 7.500 0 5z" fill="#000"/></svg>
<div style="left:1326px;top:342px;width:88px;height:19px;background:#ffe7e7"></div>
<div style="left:1719px;top:342px;width:15px;height:19px;background:#ffe7e7"></div>
<span class="t" style="left:1334.5px;top:346px;">НормРасхМат</span>
<div style="left:1416px;top:344px;width:300px;height:15px;background:#fff"></div>
<div style="left:1703px;top:344px;width:13px;height:15px;background:#f4f4f4"></div>
<svg style="left:1705.5px;top:350px" width="7" height="4" viewBox="0 0 7 4"><path d="M0 0h7L3.500 4z" fill="#000"/></svg>
<div style="left:1720px;top:344px;width:12px;height:12px;background:#fff;border:1px solid;border-color:#808080 #fff #fff #808080;box-shadow:inset 1px 1px 0 #404040, inset -1px -1px 0 #e0e0e0"></div>
<svg style="left:1722.5px;top:346.5px" width="7" height="7" viewBox="0 0 7 7.500"><path d="M0 2l2.500 2.500L7 0v3L2.500 7.500 0 5z" fill="#000"/></svg>
<div style="left:1326px;top:361px;width:88px;height:19px;background:#f0f0f0"></div>
<div style="left:1719px;top:361px;width:15px;height:19px;background:#f0f0f0"></div>
<span class="t" style="left:1334.5px;top:365px;">Прочие</span>
<div style="left:1416px;top:363px;width:300px;height:15px;background:#fff"></div>
<div style="left:1703px;top:363px;width:13px;height:15px;background:#f4f4f4"></div>
<svg style="left:1705.5px;top:369px" width="7" height="4" viewBox="0 0 7 4"><path d="M0 0h7L3.500 4z" fill="#000"/></svg>
<div style="left:1720px;top:363px;width:12px;height:12px;background:#fff;border:1px solid;border-color:#808080 #fff #fff #808080;box-shadow:inset 1px 1px 0 #404040, inset -1px -1px 0 #e0e0e0"></div>
<svg style="left:1722.5px;top:365.5px" width="7" height="7" viewBox="0 0 7 7.500"><path d="M0 2l2.500 2.500L7 0v3L2.500 7.500 0 5z" fill="#000"/></svg>
<div style="left:1734px;top:171px;width:17px;height:208px;background:#f8f8f8;background-image:repeating-conic-gradient(#fff 0 25%,#ececec 0 50%);background-size:2px 2px"></div>
<div class="btn" style="left:1734px;top:171px;width:17px;height:16px;"></div>
<svg style="left:1739px;top:177px" width="7" height="4" viewBox="0 0 7 4"><path d="M0 4h7L3.500 0z" fill="#000"/></svg>
<div class="btn" style="left:1734px;top:187px;width:17px;height:148px;"></div>
<div class="btn" style="left:1734px;top:363px;width:17px;height:16px;"></div>
<svg style="left:1739.0px;top:369.5px" width="7" height="4" viewBox="0 0 7 4"><path d="M0 0h7L3.500 4z" fill="#000"/></svg>
<div style="left:1324px;top:393px;width:428px;height:256px;background:#fff;border:1px solid;border-color:#696969 #fff #fff #696969;box-shadow:inset 1px 1px 0 #a0a0a0"></div>
<div style="left:1735px;top:395px;width:16px;height:253px;background:#f0f0f0"></div>
<svg style="left:1738px;top:399px" width="10" height="7" viewBox="0 0 10 7"><path d="M1 6l4-4 4 4" fill="none" stroke="#b4b4b4" stroke-width="1.300"/></svg>
<svg style="left:1738px;top:636px" width="10" height="7" viewBox="0 0 10 7"><path d="M1 1l4 4 4-4" fill="none" stroke="#b4b4b4" stroke-width="1.300"/></svg>
<div style="left:1325px;top:655px;width:11px;height:11px;background:#fff;border:1px solid;border-color:#808080 #e0e0e0 #e0e0e0 #808080"></div>
<span class="t" style="left:1342.5px;top:655px;">Показывать в наименовании</span>
<div style="left:1320px;top:675px;width:438px;height:23px;background:#f8f8f8;background-image:repeating-conic-gradient(#fff 0 25%,#ececec 0 50%);background-size:2px 2px"></div>
<div style="left:1320px;top:675px;width:438px;height:1px;background:#696969"></div>
<div style="left:1320px;top:676px;width:438px;height:1px;background:#a0a0a0"></div>
<svg style="left:1320px;top:675px" width="150" height="22" viewBox="0 0 150 22"><path d="M0 0h10l5 15.500h64L83 0" fill="#f0f0f0"/><path d="M9.500 1l5 14.500h64.500" fill="none" stroke="#000" stroke-width="1"/><path d="M79 15.500L83.500 1" fill="none" stroke="#606060"/><path d="M82 4l3 11.500h52L142 1" fill="#fff" stroke="#000" stroke-width="1"/><path d="M83 1.500L82 4" stroke="#606060"/></svg>
<span class="t" style="left:1334px;top:679px;">Примечание</span>
<span class="t" style="left:1406px;top:679px;">Поправка</span>
<div style="left:1328px;top:703px;width:12px;height:12px;background:#fff;border:1px solid;border-color:#808080 #fff #fff #808080;box-shadow:inset 1px 1px 0 #404040, inset -1px -1px 0 #e0e0e0"></div>
<svg style="left:1330.5px;top:705.5px" width="7" height="7" viewBox="0 0 7 7.500"><path d="M0 2l2.500 2.500L7 0v3L2.500 7.500 0 5z" fill="#000"/></svg>
<span class="t" style="left:1347px;top:704px;">Заменять назначенные</span>
<div class="btn" style="left:1328px;top:722px;width:207px;height:24px;"></div>
<span class="t" style="left:1328px;top:728px;width:207px;text-align:center;color:#a0a0a0;font-size:11px">Применить</span>
<div class="btn" style="left:1542px;top:722px;width:207px;height:24px;"></div>
<span class="t" style="left:1542px;top:728px;width:207px;text-align:center;color:#a0a0a0;font-size:11px">Отменить</span>
<div style="left:2px;top:752px;width:1756px;height:3px;background:#fff"></div>
<div style="left:40px;top:755px;width:1718px;height:1px;background:#a0a0a0"></div>
<div style="left:41px;top:756px;width:1717px;height:330px;background:#fff"></div>
<div style="left:3px;top:756px;width:8px;height:9px;border-right:1px solid #808080;border-bottom:1px solid #808080;background:#f0f0f0"></div>
<svg style="left:5px;top:758px" width="5" height="5" viewBox="0 0 5 5"><path d="M0 0l5 5M5 0L0 5" stroke="#000" stroke-width=".9"/></svg>
<div style="left:6px;top:767px;width:1px;height:318px;background:#fff"></div>
<div style="left:7px;top:767px;width:1px;height:318px;background:#a0a0a0"></div>
<div style="left:9px;top:767px;width:1px;height:318px;background:#fff"></div>
<div style="left:10px;top:767px;width:1px;height:318px;background:#a0a0a0"></div>
<div style="left:40px;top:756px;width:1px;height:330px;background:#a0a0a0"></div>
<svg style="left:21px;top:768px" width="12" height="12" viewBox="0 0 12 12"><path d="M6 1.900v8.200M1.900 6h8.200" stroke="#5ca414" stroke-width="3.700" stroke-linecap="round" fill="none"/></svg>
<div style="left:10.6px;top:759.3px;width:27.2px;height:26.4px;border:3.200px solid #ff0000"></div>
<div style="left:16px;top:787px;width:23px;height:1px;background:#a0a0a0"></div>
<div style="left:16px;top:788px;width:23px;height:1px;background:#fff"></div>
<svg style="left:21px;top:796px" width="12" height="12" viewBox="0 0 12 12"><path d="M1 1l10 10M11 1L1 11" stroke="#f0582c" stroke-width="1.400"/></svg>
<div style="left:14px;top:813px;width:26px;height:1px;background:#a0a0a0"></div>
<div style="left:14px;top:814px;width:26px;height:1px;background:#fff"></div>
<div style="left:15px;top:826px;width:22px;height:20px;background:#f8f8f8;background-image:repeating-conic-gradient(#fff 0 25%,#f0f0f0 0 50%);background-size:2px 2px;border-left:1px solid #a0a0a0;border-top:1px solid #a0a0a0;border-right:1px solid #fff;border-bottom:1px solid #fff"></div>
<span class="t" style="left:22.5px;top:832px;">Ст</span>
<span class="t" style="left:21px;top:859px;">ТР</span>
<span class="t" style="left:21px;top:887px;">ВР</span>
<div style="left:41px;top:755px;width:992px;height:1px;background:#a0a0a0"></div>
<div style="left:41px;top:755px;width:1px;height:331px;background:#b4b4b4"></div>
<div style="left:42px;top:756px;width:12px;height:67px;background:#f0f0f0;border-right:1px solid #808080;border-bottom:1px solid #808080;box-shadow:inset 1px 1px 0 #fff"></div>
<div style="left:54px;top:756px;width:36px;height:67px;background:#f0f0f0;border-right:1px solid #808080;border-bottom:1px solid #808080;box-shadow:inset 1px 1px 0 #fff"></div>
<span class="t" style="left:56.5px;top:785px;">№п/п</span>
<div style="left:90px;top:756px;width:110px;height:67px;background:#f0f0f0;border-right:1px solid #808080;border-bottom:1px solid #808080;box-shadow:inset 1px 1px 0 #fff"></div>
<span class="t" style="left:92.5px;top:785px;">Переменная</span>
<div style="left:200px;top:756px;width:271px;height:67px;background:#f0f0f0;border-right:1px solid #808080;border-bottom:1px solid #808080;box-shadow:inset 1px 1px 0 #fff"></div>
<span class="t" style="left:202.5px;top:785px;">Наименование</span>
<div style="left:471px;top:756px;width:81px;height:49px;background:#f0f0f0;border-right:1px solid #808080;border-bottom:1px solid #808080;box-shadow:inset 1px 1px 0 #fff"></div>
<span class="t" style="left:473.5px;top:769px;">Стандартные</span>
<span class="t" style="left:473.5px;top:782px;">итоги</span>
<div style="left:471px;top:805px;width:81px;height:18px;background:#f0f0f0;border-right:1px solid #808080;border-bottom:1px solid #808080;box-shadow:inset 1px 1px 0 #fff"></div>
<span class="t" style="left:473.5px;top:809px;">Уровень цен</span>
<div style="left:552px;top:756px;width:243px;height:18px;background:#f0f0f0;border-right:1px solid #808080;border-bottom:1px solid #808080;box-shadow:inset 1px 1px 0 #fff"></div>
<span class="t" style="left:554.5px;top:760px;">Стандартные итоги</span>
<div style="left:552px;top:774px;width:243px;height:18px;background:#f0f0f0;border-right:1px solid #808080;border-bottom:1px solid #808080;box-shadow:inset 1px 1px 0 #fff"></div>
<span class="t" style="left:554.5px;top:778px;">Уровень цен</span>
<div style="left:552px;top:792px;width:81px;height:31px;background:#f0f0f0;border-right:1px solid #808080;border-bottom:1px solid #808080;box-shadow:inset 1px 1px 0 #fff"></div>
<span class="t" style="left:554.5px;top:796px;">Стоимость</span>
<span class="t" style="left:554.5px;top:809px;">базовая</span>
<div style="left:633px;top:792px;width:81px;height:31px;background:#f0f0f0;border-right:1px solid #808080;border-bottom:1px solid #808080;box-shadow:inset 1px 1px 0 #fff"></div>
<span class="t" style="left:635.5px;top:803px;">Индекс</span>
<div style="left:714px;top:792px;width:81px;height:31px;background:#f0f0f0;border-right:1px solid #808080;border-bottom:1px solid #808080;box-shadow:inset 1px 1px 0 #fff"></div>
<span class="t" style="left:716.5px;top:796px;">Стоимость</span>
<span class="t" style="left:716.5px;top:809px;">текущая</span>
<div style="left:795px;top:756px;width:61px;height:67px;background:#f0f0f0;border-right:1px solid #808080;border-bottom:1px solid #808080;box-shadow:inset 1px 1px 0 #fff"></div>
<span class="t" style="left:797.5px;top:785px;">Тип</span>
<div style="left:856px;top:756px;width:76px;height:67px;background:#f0f0f0;border-right:1px solid #808080;border-bottom:1px solid #808080;box-shadow:inset 1px 1px 0 #fff"></div>
<span class="t" style="left:858.5px;top:785px;font-weight:bold;">Печать</span>
<div style="left:932px;top:756px;width:101px;height:67px;background:#f0f0f0;border-right:1px solid #808080;border-bottom:1px solid #808080;box-shadow:inset 1px 1px 0 #fff"></div>
<span class="t" style="left:934.5px;top:785px;">Примечание</span>
<div style="left:42px;top:823px;width:12px;height:16px;background:#f0f0f0;border-right:1px solid #808080;border-bottom:1px solid #808080"></div>
<div style="left:54px;top:823px;width:979px;height:15px;background:#fff"></div>
<div style="left:54px;top:838px;width:979px;height:1px;background:#c0c0c0"></div>
<div style="left:54px;top:838px;width:36px;height:1px;background:#808080"></div>
<div style="left:89px;top:823px;width:1px;height:16px;background:#808080"></div>
<div style="left:199px;top:823px;width:1px;height:16px;background:#c0c0c0"></div>
<div style="left:470px;top:823px;width:1px;height:16px;background:#c0c0c0"></div>
<div style="left:551px;top:823px;width:1px;height:16px;background:#c0c0c0"></div>
<div style="left:632px;top:823px;width:1px;height:16px;background:#c0c0c0"></div>
<div style="left:713px;top:823px;width:1px;height:16px;background:#c0c0c0"></div>
<div style="left:794px;top:823px;width:1px;height:16px;background:#c0c0c0"></div>
<div style="left:855px;top:823px;width:1px;height:16px;background:#c0c0c0"></div>
<div style="left:931px;top:823px;width:1px;height:16px;background:#c0c0c0"></div>
<div style="left:1032px;top:823px;width:1px;height:16px;background:#c0c0c0"></div>
<span class="t" style="left:57px;top:826px;">18</span>
<span class="t" style="left:92px;top:826px;">Прочие</span>
<span class="t" style="left:202px;top:826px;">Прочие работы с НР и СП</span>
<span class="t r" style="left:458px;width:90px;top:826px">0,00</span>
<span class="t r" style="left:539px;width:90px;top:826px">0,00</span>
<span class="t r" style="left:701px;width:90px;top:826px">0</span>
<span class="t" style="left:797px;top:826px;">Прочие</span>
<span class="t" style="left:858px;top:826px;">Нет</span>
<div style="left:42px;top:839px;width:12px;height:16px;background:#f0f0f0;border-right:1px solid #808080;border-bottom:1px solid #808080"></div>
<div style="left:54px;top:839px;width:979px;height:15px;background:#fff"></div>
<div style="left:54px;top:839px;width:801px;height:15px;background:#f0f0f0"></div>
<div style="left:54px;top:854px;width:979px;height:1px;background:#c0c0c0"></div>
<div style="left:54px;top:854px;width:36px;height:1px;background:#808080"></div>
<div style="left:89px;top:839px;width:1px;height:16px;background:#808080"></div>
<div style="left:199px;top:839px;width:1px;height:16px;background:#c0c0c0"></div>
<div style="left:470px;top:839px;width:1px;height:16px;background:#c0c0c0"></div>
<div style="left:551px;top:839px;width:1px;height:16px;background:#c0c0c0"></div>
<div style="left:632px;top:839px;width:1px;height:16px;background:#c0c0c0"></div>
<div style="left:713px;top:839px;width:1px;height:16px;background:#c0c0c0"></div>
<div style="left:794px;top:839px;width:1px;height:16px;background:#c0c0c0"></div>
<div style="left:855px;top:839px;width:1px;height:16px;background:#c0c0c0"></div>
<div style="left:931px;top:839px;width:1px;height:16px;background:#c0c0c0"></div>
<div style="left:1032px;top:839px;width:1px;height:16px;background:#c0c0c0"></div>
<span class="t" style="left:57px;top:842px;"></span>
<span class="t" style="left:92px;top:842px;">ПНР</span>
<span class="t" style="left:202px;top:842px;">Пусконаладочные работы</span>
<span class="t r" style="left:458px;width:90px;top:842px">0,00</span>
<span class="t r" style="left:539px;width:90px;top:842px">0,00</span>
<span class="t r" style="left:701px;width:90px;top:842px">0</span>
<span class="t" style="left:797px;top:842px;"></span>
<span class="t" style="left:858px;top:842px;">Да</span>
<div style="left:42px;top:855px;width:12px;height:16px;background:#f0f0f0;border-right:1px solid #808080;border-bottom:1px solid #808080"></div>
<div style="left:54px;top:855px;width:979px;height:15px;background:#fff"></div>
<div style="left:54px;top:855px;width:801px;height:15px;background:#f0f0f0"></div>
<div style="left:54px;top:870px;width:979px;height:1px;background:#c0c0c0"></div>
<div style="left:54px;top:870px;width:36px;height:1px;background:#808080"></div>
<div style="left:89px;top:855px;width:1px;height:16px;background:#808080"></div>
<div style="left:199px;top:855px;width:1px;height:16px;background:#c0c0c0"></div>
<div style="left:470px;top:855px;width:1px;height:16px;background:#c0c0c0"></div>
<div style="left:551px;top:855px;width:1px;height:16px;background:#c0c0c0"></div>
<div style="left:632px;top:855px;width:1px;height:16px;background:#c0c0c0"></div>
<div style="left:713px;top:855px;width:1px;height:16px;background:#c0c0c0"></div>
<div style="left:794px;top:855px;width:1px;height:16px;background:#c0c0c0"></div>
<div style="left:855px;top:855px;width:1px;height:16px;background:#c0c0c0"></div>
<div style="left:931px;top:855px;width:1px;height:16px;background:#c0c0c0"></div>
<div style="left:1032px;top:855px;width:1px;height:16px;background:#c0c0c0"></div>
<span class="t" style="left:57px;top:858px;"></span>
<span class="t" style="left:92px;top:858px;">ПНРвхолостую</span>
<span class="t" style="left:202px;top:858px;">Пусконаладочные работы вхолостую</span>
<span class="t r" style="left:458px;width:90px;top:858px">0,00</span>
<span class="t r" style="left:539px;width:90px;top:858px">0,00</span>
<span class="t r" style="left:701px;width:90px;top:858px">0</span>
<span class="t" style="left:797px;top:858px;"></span>
<span class="t" style="left:858px;top:858px;">Да</span>
<div style="left:42px;top:871px;width:12px;height:16px;background:#f0f0f0;border-right:1px solid #808080;border-bottom:1px solid #808080"></div>
<div style="left:54px;top:871px;width:979px;height:15px;background:#fff"></div>
<div style="left:54px;top:871px;width:801px;height:15px;background:#f0f0f0"></div>
<div style="left:54px;top:886px;width:979px;height:1px;background:#c0c0c0"></div>
<div style="left:54px;top:886px;width:36px;height:1px;background:#808080"></div>
<div style="left:89px;top:871px;width:1px;height:16px;background:#808080"></div>
<div style="left:199px;top:871px;width:1px;height:16px;background:#c0c0c0"></div>
<div style="left:470px;top:871px;width:1px;height:16px;background:#c0c0c0"></div>
<div style="left:551px;top:871px;width:1px;height:16px;background:#c0c0c0"></div>
<div style="left:632px;top:871px;width:1px;height:16px;background:#c0c0c0"></div>
<div style="left:713px;top:871px;width:1px;height:16px;background:#c0c0c0"></div>
<div style="left:794px;top:871px;width:1px;height:16px;background:#c0c0c0"></div>
<div style="left:855px;top:871px;width:1px;height:16px;background:#c0c0c0"></div>
<div style="left:931px;top:871px;width:1px;height:16px;background:#c0c0c0"></div>
<div style="left:1032px;top:871px;width:1px;height:16px;background:#c0c0c0"></div>
<span class="t" style="left:57px;top:874px;"></span>
<span class="t" style="left:92px;top:874px;">ПНРподНагрузкой</span>
<span class="t" style="left:202px;top:874px;">Пусконаладочные работы под нагрузкой</span>
<span class="t r" style="left:458px;width:90px;top:874px">0,00</span>
<span class="t r" style="left:539px;width:90px;top:874px">0,00</span>
<span class="t r" style="left:701px;width:90px;top:874px">0</span>
<span class="t" style="left:797px;top:874px;"></span>
<span class="t" style="left:858px;top:874px;">Да</span>
<div style="left:42px;top:887px;width:12px;height:16px;background:#f0f0f0;border-right:1px solid #808080;border-bottom:1px solid #808080"></div>
<div style="left:54px;top:887px;width:979px;height:15px;background:#fff"></div>
<div style="left:54px;top:887px;width:801px;height:15px;background:#f0f0f0"></div>
<div style="left:54px;top:902px;width:979px;height:1px;background:#c0c0c0"></div>
<div style="left:54px;top:902px;width:36px;height:1px;background:#808080"></div>
<div style="left:89px;top:887px;width:1px;height:16px;background:#808080"></div>
<div style="left:199px;top:887px;width:1px;height:16px;background:#c0c0c0"></div>
<div style="left:470px;top:887px;width:1px;height:16px;background:#c0c0c0"></div>
<div style="left:551px;top:887px;width:1px;height:16px;background:#c0c0c0"></div>
<div style="left:632px;top:887px;width:1px;height:16px;background:#c0c0c0"></div>
<div style="left:713px;top:887px;width:1px;height:16px;background:#c0c0c0"></div>
<div style="left:794px;top:887px;width:1px;height:16px;background:#c0c0c0"></div>
<div style="left:855px;top:887px;width:1px;height:16px;background:#c0c0c0"></div>
<div style="left:931px;top:887px;width:1px;height:16px;background:#c0c0c0"></div>
<div style="left:1032px;top:887px;width:1px;height:16px;background:#c0c0c0"></div>
<span class="t" style="left:57px;top:890px;"></span>
<span class="t" style="left:92px;top:890px;">ПрочиеБезПНР</span>
<span class="t" style="left:202px;top:890px;">Прочие затраты</span>
<span class="t r" style="left:458px;width:90px;top:890px">0,00</span>
<span class="t r" style="left:539px;width:90px;top:890px">0,00</span>
<span class="t r" style="left:701px;width:90px;top:890px">0</span>
<span class="t" style="left:797px;top:890px;"></span>
<span class="t" style="left:858px;top:890px;">Да</span>
<div style="left:42px;top:903px;width:12px;height:16px;background:#f0f0f0;border-right:1px solid #808080;border-bottom:1px solid #808080"></div>
<div style="left:54px;top:903px;width:979px;height:15px;background:#fff"></div>
<div style="left:54px;top:903px;width:801px;height:15px;background:#f0f0f0"></div>
<div style="left:54px;top:918px;width:979px;height:1px;background:#c0c0c0"></div>
<div style="left:54px;top:918px;width:36px;height:1px;background:#808080"></div>
<div style="left:89px;top:903px;width:1px;height:16px;background:#808080"></div>
<div style="left:199px;top:903px;width:1px;height:16px;background:#c0c0c0"></div>
<div style="left:470px;top:903px;width:1px;height:16px;background:#c0c0c0"></div>
<div style="left:551px;top:903px;width:1px;height:16px;background:#c0c0c0"></div>
<div style="left:632px;top:903px;width:1px;height:16px;background:#c0c0c0"></div>
<div style="left:713px;top:903px;width:1px;height:16px;background:#c0c0c0"></div>
<div style="left:794px;top:903px;width:1px;height:16px;background:#c0c0c0"></div>
<div style="left:855px;top:903px;width:1px;height:16px;background:#c0c0c0"></div>
<div style="left:931px;top:903px;width:1px;height:16px;background:#c0c0c0"></div>
<div style="left:1032px;top:903px;width:1px;height:16px;background:#c0c0c0"></div>
<span class="t" style="left:57px;top:906px;"></span>
<span class="t" style="left:92px;top:906px;">ХозИнвПрочие</span>
<span class="t" style="left:202px;top:906px;">Хозяйственный инвентарь (Прочие)</span>
<span class="t r" style="left:458px;width:90px;top:906px">0,00</span>
<span class="t r" style="left:539px;width:90px;top:906px">0,00</span>
<span class="t r" style="left:701px;width:90px;top:906px">0</span>
<span class="t" style="left:797px;top:906px;"></span>
<span class="t" style="left:858px;top:906px;">Да</span>
<div style="left:42px;top:919px;width:12px;height:16px;background:#f0f0f0;border-right:1px solid #808080;border-bottom:1px solid #808080"></div>
<div style="left:54px;top:919px;width:979px;height:15px;background:#fff"></div>
<div style="left:54px;top:934px;width:979px;height:1px;background:#c0c0c0"></div>
<div style="left:54px;top:934px;width:36px;height:1px;background:#808080"></div>
<div style="left:89px;top:919px;width:1px;height:16px;background:#808080"></div>
<div style="left:199px;top:919px;width:1px;height:16px;background:#c0c0c0"></div>
<div style="left:470px;top:919px;width:1px;height:16px;background:#c0c0c0"></div>
<div style="left:551px;top:919px;width:1px;height:16px;background:#c0c0c0"></div>
<div style="left:632px;top:919px;width:1px;height:16px;background:#c0c0c0"></div>
<div style="left:713px;top:919px;width:1px;height:16px;background:#c0c0c0"></div>
<div style="left:794px;top:919px;width:1px;height:16px;background:#c0c0c0"></div>
<div style="left:855px;top:919px;width:1px;height:16px;background:#c0c0c0"></div>
<div style="left:931px;top:919px;width:1px;height:16px;background:#c0c0c0"></div>
<div style="left:1032px;top:919px;width:1px;height:16px;background:#c0c0c0"></div>
<span class="t" style="left:57px;top:922px;">20</span>
<span class="t" style="left:92px;top:922px;">ВозврМат</span>
<span class="t" style="left:202px;top:922px;">Возврат материалов</span>
<span class="t r" style="left:458px;width:90px;top:922px">0,00</span>
<span class="t r" style="left:539px;width:90px;top:922px">0,00</span>
<span class="t r" style="left:701px;width:90px;top:922px">-</span>
<span class="t" style="left:797px;top:922px;">ВозврМат</span>
<span class="t" style="left:858px;top:922px;">Нет</span>
<div style="left:42px;top:935px;width:12px;height:16px;background:#f0f0f0;border-right:1px solid #808080;border-bottom:1px solid #808080"></div>
<div style="left:54px;top:935px;width:979px;height:15px;background:#fff"></div>
<div style="left:54px;top:950px;width:979px;height:1px;background:#c0c0c0"></div>
<div style="left:54px;top:950px;width:36px;height:1px;background:#808080"></div>
<div style="left:89px;top:935px;width:1px;height:16px;background:#808080"></div>
<div style="left:199px;top:935px;width:1px;height:16px;background:#c0c0c0"></div>
<div style="left:470px;top:935px;width:1px;height:16px;background:#c0c0c0"></div>
<div style="left:551px;top:935px;width:1px;height:16px;background:#c0c0c0"></div>
<div style="left:632px;top:935px;width:1px;height:16px;background:#c0c0c0"></div>
<div style="left:713px;top:935px;width:1px;height:16px;background:#c0c0c0"></div>
<div style="left:794px;top:935px;width:1px;height:16px;background:#c0c0c0"></div>
<div style="left:855px;top:935px;width:1px;height:16px;background:#c0c0c0"></div>
<div style="left:931px;top:935px;width:1px;height:16px;background:#c0c0c0"></div>
<div style="left:1032px;top:935px;width:1px;height:16px;background:#c0c0c0"></div>
<span class="t" style="left:57px;top:938px;">21</span>
<span class="t" style="left:92px;top:938px;">ТрудСтр</span>
<span class="t" style="left:202px;top:938px;">Трудозатраты строителей</span>
<span class="t r" style="left:458px;width:90px;top:938px">190,00608</span>
<span class="t r" style="left:539px;width:90px;top:938px">190,00608</span>
<span class="t r" style="left:701px;width:90px;top:938px">190,00608</span>
<span class="t" style="left:797px;top:938px;">ТрудСтр</span>
<span class="t" style="left:858px;top:938px;">Нет</span>
<div style="left:42px;top:951px;width:12px;height:16px;background:#f0f0f0;border-right:1px solid #808080;border-bottom:1px solid #808080"></div>
<div style="left:54px;top:951px;width:979px;height:15px;background:#fff"></div>
<div style="left:54px;top:966px;width:979px;height:1px;background:#c0c0c0"></div>
<div style="left:54px;top:966px;width:36px;height:1px;background:#808080"></div>
<div style="left:89px;top:951px;width:1px;height:16px;background:#808080"></div>
<div style="left:199px;top:951px;width:1px;height:16px;background:#c0c0c0"></div>
<div style="left:470px;top:951px;width:1px;height:16px;background:#c0c0c0"></div>
<div style="left:551px;top:951px;width:1px;height:16px;background:#c0c0c0"></div>
<div style="left:632px;top:951px;width:1px;height:16px;background:#c0c0c0"></div>
<div style="left:713px;top:951px;width:1px;height:16px;background:#c0c0c0"></div>
<div style="left:794px;top:951px;width:1px;height:16px;background:#c0c0c0"></div>
<div style="left:855px;top:951px;width:1px;height:16px;background:#c0c0c0"></div>
<div style="left:931px;top:951px;width:1px;height:16px;background:#c0c0c0"></div>
<div style="left:1032px;top:951px;width:1px;height:16px;background:#c0c0c0"></div>
<span class="t" style="left:57px;top:954px;">22</span>
<span class="t" style="left:92px;top:954px;">ТрудМаш</span>
<span class="t" style="left:202px;top:954px;">Трудозатраты машинистов</span>
<span class="t r" style="left:458px;width:90px;top:954px">4,6669</span>
<span class="t r" style="left:539px;width:90px;top:954px">4,6669</span>
<span class="t r" style="left:701px;width:90px;top:954px">4,6669</span>
<span class="t" style="left:797px;top:954px;">ТрудМаш</span>
<span class="t" style="left:858px;top:954px;">Нет</span>
<div style="left:42px;top:967px;width:12px;height:16px;background:#f0f0f0;border-right:1px solid #808080;border-bottom:1px solid #808080"></div>
<div style="left:54px;top:967px;width:979px;height:15px;background:#fff"></div>
<div style="left:54px;top:982px;width:979px;height:1px;background:#c0c0c0"></div>
<div style="left:54px;top:982px;width:36px;height:1px;background:#808080"></div>
<div style="left:89px;top:967px;width:1px;height:16px;background:#808080"></div>
<div style="left:199px;top:967px;width:1px;height:16px;background:#c0c0c0"></div>
<div style="left:470px;top:967px;width:1px;height:16px;background:#c0c0c0"></div>
<div style="left:551px;top:967px;width:1px;height:16px;background:#c0c0c0"></div>
<div style="left:632px;top:967px;width:1px;height:16px;background:#c0c0c0"></div>
<div style="left:713px;top:967px;width:1px;height:16px;background:#c0c0c0"></div>
<div style="left:794px;top:967px;width:1px;height:16px;background:#c0c0c0"></div>
<div style="left:855px;top:967px;width:1px;height:16px;background:#c0c0c0"></div>
<div style="left:931px;top:967px;width:1px;height:16px;background:#c0c0c0"></div>
<div style="left:1032px;top:967px;width:1px;height:16px;background:#c0c0c0"></div>
<span class="t" style="left:57px;top:970px;">23</span>
<span class="t" style="left:92px;top:970px;">ТранспМат</span>
<span class="t" style="left:202px;top:970px;">Транспорт материалов</span>
<span class="t r" style="left:458px;width:90px;top:970px">0,00</span>
<span class="t r" style="left:539px;width:90px;top:970px">0,00</span>
<span class="t r" style="left:701px;width:90px;top:970px">-</span>
<span class="t" style="left:797px;top:970px;">ТранспМат</span>
<span class="t" style="left:858px;top:970px;">Нет</span>
<div style="left:42px;top:983px;width:12px;height:16px;background:#f0f0f0;border-right:1px solid #808080;border-bottom:1px solid #808080"></div>
<div style="left:54px;top:983px;width:979px;height:15px;background:#fff"></div>
<div style="left:54px;top:998px;width:979px;height:1px;background:#c0c0c0"></div>
<div style="left:54px;top:998px;width:36px;height:1px;background:#808080"></div>
<div style="left:89px;top:983px;width:1px;height:16px;background:#808080"></div>
<div style="left:199px;top:983px;width:1px;height:16px;background:#c0c0c0"></div>
<div style="left:470px;top:983px;width:1px;height:16px;background:#c0c0c0"></div>
<div style="left:551px;top:983px;width:1px;height:16px;background:#c0c0c0"></div>
<div style="left:632px;top:983px;width:1px;height:16px;background:#c0c0c0"></div>
<div style="left:713px;top:983px;width:1px;height:16px;background:#c0c0c0"></div>
<div style="left:794px;top:983px;width:1px;height:16px;background:#c0c0c0"></div>
<div style="left:855px;top:983px;width:1px;height:16px;background:#c0c0c0"></div>
<div style="left:931px;top:983px;width:1px;height:16px;background:#c0c0c0"></div>
<div style="left:1032px;top:983px;width:1px;height:16px;background:#c0c0c0"></div>
<span class="t" style="left:57px;top:986px;">24</span>
<span class="t" style="left:92px;top:986px;">Перевозка</span>
<span class="t" style="left:202px;top:986px;">Перевозка грузов</span>
<span class="t r" style="left:458px;width:90px;top:986px">0,00</span>
<span class="t r" style="left:539px;width:90px;top:986px">0,00</span>
<span class="t r" style="left:701px;width:90px;top:986px">0</span>
<span class="t" style="left:797px;top:986px;">Перевозка</span>
<span class="t" style="left:858px;top:986px;">Нет</span>
<div style="left:42px;top:999px;width:12px;height:16px;background:#f0f0f0;border-right:1px solid #808080;border-bottom:1px solid #808080"></div>
<div style="left:54px;top:999px;width:979px;height:15px;background:#fff"></div>
<div style="left:54px;top:999px;width:801px;height:15px;background:#f0f0f0"></div>
<div style="left:54px;top:1014px;width:979px;height:1px;background:#c0c0c0"></div>
<div style="left:54px;top:1014px;width:36px;height:1px;background:#808080"></div>
<div style="left:89px;top:999px;width:1px;height:16px;background:#808080"></div>
<div style="left:199px;top:999px;width:1px;height:16px;background:#c0c0c0"></div>
<div style="left:470px;top:999px;width:1px;height:16px;background:#c0c0c0"></div>
<div style="left:551px;top:999px;width:1px;height:16px;background:#c0c0c0"></div>
<div style="left:632px;top:999px;width:1px;height:16px;background:#c0c0c0"></div>
<div style="left:713px;top:999px;width:1px;height:16px;background:#c0c0c0"></div>
<div style="left:794px;top:999px;width:1px;height:16px;background:#c0c0c0"></div>
<div style="left:855px;top:999px;width:1px;height:16px;background:#c0c0c0"></div>
<div style="left:931px;top:999px;width:1px;height:16px;background:#c0c0c0"></div>
<div style="left:1032px;top:999px;width:1px;height:16px;background:#c0c0c0"></div>
<span class="t" style="left:57px;top:1002px;"></span>
<span class="t" style="left:92px;top:1002px;">ДопПеревозкаВсего</span>
<span class="t" style="left:202px;top:1002px;">Дополнительная перевозка</span>
<span class="t r" style="left:458px;width:90px;top:1002px">0,00</span>
<span class="t r" style="left:539px;width:90px;top:1002px">0,00</span>
<span class="t r" style="left:701px;width:90px;top:1002px">0</span>
<span class="t" style="left:797px;top:1002px;"></span>
<span class="t" style="left:858px;top:1002px;">Да</span>
<div style="left:42px;top:1015px;width:12px;height:16px;background:#f0f0f0;border-right:1px solid #808080;border-bottom:1px solid #808080"></div>
<div style="left:54px;top:1015px;width:979px;height:15px;background:#fff"></div>
<div style="left:54px;top:1015px;width:801px;height:15px;background:#f0f0f0"></div>
<div style="left:54px;top:1030px;width:979px;height:1px;background:#c0c0c0"></div>
<div style="left:54px;top:1030px;width:36px;height:1px;background:#808080"></div>
<div style="left:89px;top:1015px;width:1px;height:16px;background:#808080"></div>
<div style="left:199px;top:1015px;width:1px;height:16px;background:#c0c0c0"></div>
<div style="left:470px;top:1015px;width:1px;height:16px;background:#c0c0c0"></div>
<div style="left:551px;top:1015px;width:1px;height:16px;background:#c0c0c0"></div>
<div style="left:632px;top:1015px;width:1px;height:16px;background:#c0c0c0"></div>
<div style="left:713px;top:1015px;width:1px;height:16px;background:#c0c0c0"></div>
<div style="left:794px;top:1015px;width:1px;height:16px;background:#c0c0c0"></div>
<div style="left:855px;top:1015px;width:1px;height:16px;background:#c0c0c0"></div>
<div style="left:931px;top:1015px;width:1px;height:16px;background:#c0c0c0"></div>
<div style="left:1032px;top:1015px;width:1px;height:16px;background:#c0c0c0"></div>
<span class="t" style="left:57px;top:1018px;"></span>
<span class="t" style="left:92px;top:1018px;">ФОТ</span>
<span class="t" style="left:202px;top:1018px;">Всего ФОТ (справочно)</span>
<span class="t r" style="left:458px;width:90px;top:1018px">1 933,84</span>
<span class="t r" style="left:539px;width:90px;top:1018px">1 933,84</span>
<span class="t r" style="left:701px;width:90px;top:1018px">98 471</span>
<span class="t" style="left:797px;top:1018px;"></span>
<span class="t" style="left:858px;top:1018px;">Да</span>
<div style="left:42px;top:1031px;width:12px;height:16px;background:#f0f0f0;border-right:1px solid #808080;border-bottom:1px solid #808080"></div>
<div style="left:54px;top:1031px;width:979px;height:15px;background:#fff"></div>
<div style="left:54px;top:1046px;width:979px;height:1px;background:#c0c0c0"></div>
<div style="left:54px;top:1046px;width:36px;height:1px;background:#808080"></div>
<div style="left:89px;top:1031px;width:1px;height:16px;background:#808080"></div>
<div style="left:199px;top:1031px;width:1px;height:16px;background:#c0c0c0"></div>
<div style="left:470px;top:1031px;width:1px;height:16px;background:#c0c0c0"></div>
<div style="left:551px;top:1031px;width:1px;height:16px;background:#c0c0c0"></div>
<div style="left:632px;top:1031px;width:1px;height:16px;background:#c0c0c0"></div>
<div style="left:713px;top:1031px;width:1px;height:16px;background:#c0c0c0"></div>
<div style="left:794px;top:1031px;width:1px;height:16px;background:#c0c0c0"></div>
<div style="left:855px;top:1031px;width:1px;height:16px;background:#c0c0c0"></div>
<div style="left:931px;top:1031px;width:1px;height:16px;background:#c0c0c0"></div>
<div style="left:1032px;top:1031px;width:1px;height:16px;background:#c0c0c0"></div>
<span class="t" style="left:57px;top:1034px;">25</span>
<span class="t" style="left:92px;top:1034px;">НР</span>
<span class="t" style="left:202px;top:1034px;">Накладные расходы</span>
<span class="t r" style="left:458px;width:90px;top:1034px">2 007,59</span>
<span class="t r" style="left:539px;width:90px;top:1034px">2 007,59</span>
<span class="t r" style="left:701px;width:90px;top:1034px">102 226</span>
<span class="t" style="left:797px;top:1034px;">НР</span>
<span class="t" style="left:858px;top:1034px;">Нет</span>
<div style="left:42px;top:1047px;width:12px;height:16px;background:#f0f0f0;border-right:1px solid #808080;border-bottom:1px solid #808080"></div>
<div style="left:54px;top:1047px;width:979px;height:15px;background:#fff"></div>
<div style="left:54px;top:1062px;width:979px;height:1px;background:#c0c0c0"></div>
<div style="left:54px;top:1062px;width:36px;height:1px;background:#808080"></div>
<div style="left:89px;top:1047px;width:1px;height:16px;background:#808080"></div>
<div style="left:199px;top:1047px;width:1px;height:16px;background:#c0c0c0"></div>
<div style="left:470px;top:1047px;width:1px;height:16px;background:#c0c0c0"></div>
<div style="left:551px;top:1047px;width:1px;height:16px;background:#c0c0c0"></div>
<div style="left:632px;top:1047px;width:1px;height:16px;background:#c0c0c0"></div>
<div style="left:713px;top:1047px;width:1px;height:16px;background:#c0c0c0"></div>
<div style="left:794px;top:1047px;width:1px;height:16px;background:#c0c0c0"></div>
<div style="left:855px;top:1047px;width:1px;height:16px;background:#c0c0c0"></div>
<div style="left:931px;top:1047px;width:1px;height:16px;background:#c0c0c0"></div>
<div style="left:1032px;top:1047px;width:1px;height:16px;background:#c0c0c0"></div>
<span class="t" style="left:57px;top:1050px;">26</span>
<span class="t" style="left:92px;top:1050px;">СмПриб</span>
<span class="t" style="left:202px;top:1050px;">Сметная прибыль</span>
<span class="t r" style="left:458px;width:90px;top:1050px">891,21</span>
<span class="t r" style="left:539px;width:90px;top:1050px">891,21</span>
<span class="t r" style="left:701px;width:90px;top:1050px">45 380</span>
<span class="t" style="left:797px;top:1050px;">СмПриб</span>
<span class="t" style="left:858px;top:1050px;">Нет</span>
<div style="left:42px;top:1063px;width:12px;height:16px;background:#f0f0f0;border-right:1px solid #808080;border-bottom:1px solid #808080"></div>
<div style="left:54px;top:1063px;width:979px;height:15px;background:#fff"></div>
<div style="left:54px;top:1078px;width:979px;height:1px;background:#c0c0c0"></div>
<div style="left:54px;top:1078px;width:36px;height:1px;background:#808080"></div>
<div style="left:89px;top:1063px;width:1px;height:16px;background:#808080"></div>
<div style="left:199px;top:1063px;width:1px;height:16px;background:#c0c0c0"></div>
<div style="left:470px;top:1063px;width:1px;height:16px;background:#c0c0c0"></div>
<div style="left:551px;top:1063px;width:1px;height:16px;background:#c0c0c0"></div>
<div style="left:632px;top:1063px;width:1px;height:16px;background:#c0c0c0"></div>
<div style="left:713px;top:1063px;width:1px;height:16px;background:#c0c0c0"></div>
<div style="left:794px;top:1063px;width:1px;height:16px;background:#c0c0c0"></div>
<div style="left:855px;top:1063px;width:1px;height:16px;background:#c0c0c0"></div>
<div style="left:931px;top:1063px;width:1px;height:16px;background:#c0c0c0"></div>
<div style="left:1032px;top:1063px;width:1px;height:16px;background:#c0c0c0"></div>
<div style="left:200px;top:1063px;width:270px;height:15px;background:#0078d7;outline:1px dotted #e0a040;outline-offset:-1px"></div>
<svg style="left:45px;top:1065px" width="6" height="11" viewBox="0 0 6 11"><path d="M0 0l6 5.500L0 11z" fill="#000"/></svg>
<span class="t" style="left:57px;top:1066px;">27</span>
<span class="t" style="left:92px;top:1066px;">Всего</span>
<span class="t" style="left:202px;top:1066px;color:#fff">Всего с НР и СП</span>
<span class="t r" style="left:458px;width:90px;top:1066px">10 106,91</span>
<span class="t r" style="left:539px;width:90px;top:1066px">10 106,91</span>
<span class="t r" style="left:701px;width:90px;top:1066px">235 212</span>
<span class="t" style="left:797px;top:1066px;">Всего</span>
<span class="t" style="left:858px;top:1066px;">Нет</span>
<div style="left:1740px;top:756px;width:16px;height:330px;background:#f0f0f0"></div>
<svg style="left:1743.0px;top:762px" width="9" height="6" viewBox="0 0 9 6"><path d="M1 5l3.500-3.500L8 5" fill="none" stroke="#606060" stroke-width="1.900"/></svg>
<div style="left:1740px;top:1017px;width:15px;height:52px;background:#cdcdcd"></div>
<svg style="left:1743.0px;top:1075px" width="9" height="6" viewBox="0 0 9 6"><path d="M1 1l3.500 3.500L8 1" fill="none" stroke="#606060" stroke-width="1.900"/></svg>
<div style="left:2px;top:1086px;width:1756px;height:1px;background:#fff"></div>
<div style="left:4px;top:1091px;width:85px;height:26px;border:1px solid;border-color:#a0a0a0 #fff #fff #a0a0a0"></div>
<div style="left:93px;top:1091px;width:1593px;height:26px;border:1px solid;border-color:#a0a0a0 #fff #fff #a0a0a0"></div>
<div style="left:1691px;top:1091px;width:30px;height:26px;border:1px solid;border-color:#a0a0a0 #fff #fff #a0a0a0"></div>
<div style="left:1725px;top:1091px;width:30px;height:26px;border:1px solid;border-color:#a0a0a0 #fff #fff #a0a0a0"></div>
<div style="left:90px;top:1089px;width:1px;height:29px;background:#b8b8b8"></div>
<div style="left:91px;top:1089px;width:1px;height:29px;background:#fff"></div>
<div style="left:1688px;top:1089px;width:1px;height:29px;background:#b8b8b8"></div>
<div style="left:1689px;top:1089px;width:1px;height:29px;background:#fff"></div>
<div style="left:1722px;top:1089px;width:1px;height:29px;background:#b8b8b8"></div>
<div style="left:1723px;top:1089px;width:1px;height:29px;background:#fff"></div>
<span class="m" style="left:1732.5px;top:1098px;letter-spacing:-.9px">RU</span>
<svg style="left:1696px;top:1094px" width="20" height="20" viewBox="0 0 20 20"><circle cx="10" cy="10" r="7.800" fill="#9c9c9c"/><rect x="9" y="8.500" width="2.200" height="6" fill="#fff"/><rect x="9" y="5" width="2.200" height="2.200" fill="#fff"/><path d="M2.200 2.200l15.500 15.500" stroke="#ff0000" stroke-width="2"/></svg>
<svg style="left:240px;top:930px" width="80" height="140" viewBox="240 930 80 140"><path d="M249 1063.500L303 951" stroke="#e8222c" stroke-width="2.600" fill="none"/><path d="M309.500 939L295 951l13.500 5.500z" fill="#e8222c"/></svg>
<div style="left:310px;top:922px;width:160px;height:1px;background:repeating-linear-gradient(90deg,#000 0 1px,#f0a030 1px 2px)"></div>
<div style="left:309px;top:923px;width:266px;height:163px;background:#f0f0f0;border:1px solid #a8a8a8;border-bottom:none;box-shadow:inset 1px 1px 0 #fff"></div>
<div style="left:332px;top:927px;width:238px;height:21px;background:#0078d7"></div>
<div style="left:312px;top:927px;width:19px;height:21px;background:#f2f2f2;border-right:1px solid #a8a8a8"></div>
<svg style="left:315px;top:930px" width="12" height="12" viewBox="0 0 12 12"><path d="M6 1.800v8.400M1.800 6h8.400" stroke="#5ca414" stroke-width="3.500" stroke-linecap="round" fill="none"/></svg>
<div style="left:309.8px;top:924.7px;width:262.8px;height:24.4px;border:2.600px solid #ff0000"></div>
<span class="m" style="left:334px;top:930.5px;color:#fff">Добавить</span>
<span class="m" style="left:546px;top:930.5px;color:#fff">Ins</span>
<div style="left:313px;top:951px;width:258px;height:1px;background:#a0a0a0"></div>
<div style="left:313px;top:952px;width:258px;height:1px;background:#fff"></div>
<svg style="left:316px;top:960px" width="11" height="11" viewBox="0 0 11 11"><path d="M1 1l9 9M10 1L1 10" stroke="#f0582c" stroke-width="1.400"/></svg>
<span class="m" style="left:334px;top:960px;">Удалить</span>
<span class="m" style="left:517px;top:960px;">Ctrl+Del</span>
<div style="left:313px;top:980px;width:258px;height:1px;background:#a0a0a0"></div>
<div style="left:313px;top:981px;width:258px;height:1px;background:#fff"></div>
<span class="m" style="left:334px;top:989px;">Действия</span>
<svg style="left:561px;top:989px" width="4" height="8" viewBox="0 0 4 8"><path d="M0 0l4 4-4 4z" fill="#000"/></svg>
<span class="m" style="left:334px;top:1010px;">Показывать строки</span>
<svg style="left:561px;top:1010px" width="4" height="8" viewBox="0 0 4 8"><path d="M0 0l4 4-4 4z" fill="#000"/></svg>
<div style="left:313px;top:1030px;width:258px;height:1px;background:#a0a0a0"></div>
<div style="left:313px;top:1031px;width:258px;height:1px;background:#fff"></div>
<div style="left:313px;top:1035px;width:18px;height:19px;background:#f8f8f8;background-image:repeating-conic-gradient(#fff 0 25%,#f0f0f0 0 50%);background-size:2px 2px;border-left:1px solid #a0a0a0;border-top:1px solid #a0a0a0;border-right:1px solid #fff;border-bottom:1px solid #fff"></div>
<svg style="left:318px;top:1041px" width="8" height="8" viewBox="0 0 8 8"><path d="M0 3l2.800 2.400L8 0v3L2.800 8 0 5.600z" fill="#000"/></svg>
<span class="m" style="left:334px;top:1039px;">Синхронизировать со сметой (актом)</span>
<div style="left:313px;top:1059px;width:258px;height:1px;background:#a0a0a0"></div>
<div style="left:313px;top:1060px;width:258px;height:1px;background:#fff"></div>
<span class="m" style="left:334px;top:1068px;">Настроить это меню...</span>
</body></html>
